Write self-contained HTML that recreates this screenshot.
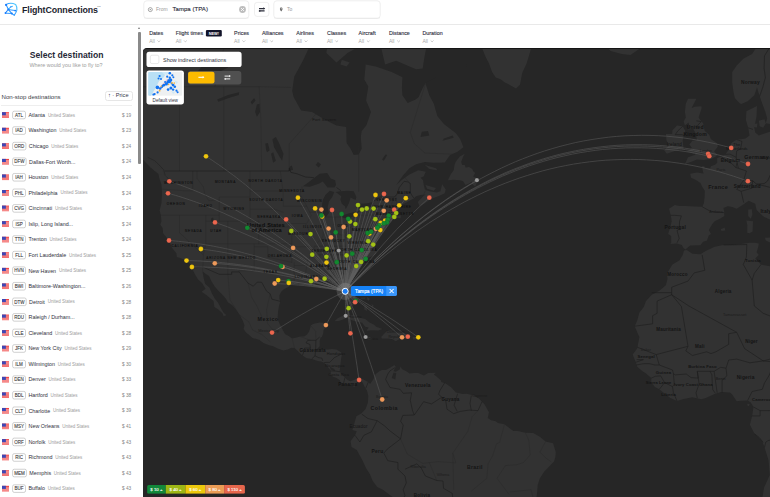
<!DOCTYPE html>
<html><head><meta charset="utf-8"><style>
*{margin:0;padding:0;box-sizing:border-box}
html,body{width:770px;height:497px;overflow:hidden;background:#fff;font-family:"Liberation Sans",sans-serif;color:#2a2c3a}
.a{position:absolute;white-space:nowrap}
#map{position:absolute;left:143px;top:48px;width:627px;height:449px;background:#262626;overflow:hidden;border-top-left-radius:4px;border-top:1px solid #151515}
#map svg{position:absolute;left:0;top:-1px}
.row{position:absolute;left:0;width:136px;height:15.56px}
.flag{position:absolute;left:2px;top:5.2px;width:7px;height:5.2px;background:repeating-linear-gradient(#e8383d 0 .8px,#fff .8px 1.5px)}
.flag:before{content:"";position:absolute;left:0;top:0;width:3.6px;height:2.8px;background:#3a4fa8}
.code{position:absolute;left:12.5px;top:3.7px;width:13.2px;height:7.7px;border:.7px solid #9a9a9a;border-radius:1.6px;font-size:4.4px;line-height:6.3px;text-align:center;color:#333}
.city{position:absolute;left:28.4px;top:3.6px;font-size:5.3px;line-height:7px;color:#30323e}
.cty{font-size:4.3px;color:#a6a6a6;margin-left:2.6px}
.pr{position:absolute;right:5px;top:4px;font-size:4.6px;line-height:6px;color:#888}
.flt{position:absolute;top:29.8px;font-size:5.35px;line-height:7px;color:#30323e}
.all{position:absolute;top:37.6px;font-size:4.9px;line-height:6px;color:#b0b0b0}
</style></head><body>
<!-- header -->
<div class="a" style="left:0;top:24px;width:770px;height:.8px;background:#e9e9e9"></div>
<svg class="a" style="left:0;top:0" width="770" height="48" viewBox="0 0 770 48">
<defs><linearGradient id="lg" x1="0" y1="1" x2="1" y2="0"><stop offset="0" stop-color="#0a66ff"/><stop offset="1" stop-color="#56d4ff"/></linearGradient></defs>
<g fill="none" stroke="url(#lg)" stroke-width="1.05" stroke-linecap="round" stroke-linejoin="round">
<path d="M6 4.6 Q10.5 2 15.6 4.4 Q18.8 9.5 14.3 15.2"/><path d="M6 4.6 L8.4 9.4 L11.8 13.6 L14.3 15.2"/><path d="M5.4 13 L8.4 9.4 L10.5 7"/><path d="M5.4 13 L11.8 13.6"/><path d="M8.4 9.4 L15.2 10.6"/><path d="M10.5 7 L12.5 6.2"/>
</g>
<g fill="#1a7dff"><circle cx="6.1" cy="4.9" r="1.1"/><circle cx="8.4" cy="9.4" r="1"/><circle cx="15.2" cy="10.6" r=".9"/><circle cx="11.8" cy="13.6" r="1"/><circle cx="5.5" cy="13" r=".9"/></g>
<text x="22" y="12.5" font-size="8.85" font-weight="bold" fill="#1c1e2e" letter-spacing="-.1">FlightConnections</text>
<text x="97.3" y="6.8" font-size="2.2" fill="#555">TM</text>
<rect x="143.8" y="0.8" width="105" height="17.6" rx="3" fill="#fff" stroke="#e2e2e2" stroke-width=".6"/>
<rect x="143.8" y="17.6" width="105" height="1.2" rx=".6" fill="#000" fill-opacity=".035"/>
<circle cx="150.3" cy="9.6" r="2" fill="none" stroke="#8a8a8a" stroke-width=".75"/><circle cx="150.3" cy="9.6" r=".7" fill="#8a8a8a"/>
<text x="156" y="11.3" font-size="5" fill="#9a9a9a">From</text>
<text x="172.5" y="11.3" font-size="6.0" fill="#272938" stroke="#272938" stroke-width=".12" letter-spacing=".05">Tampa (TPA)</text>
<circle cx="242.5" cy="9.5" r="3.4" fill="#bdbdbd"/><path d="M241 8 L244 11 M244 8 L241 11" stroke="#fff" stroke-width=".8"/>
<rect x="254.5" y="2.4" width="14.4" height="14" rx="2.6" fill="#fff" stroke="#e4e4e4" stroke-width=".6"/>
<path d="M259 8.6 H264.6 M264.6 10.9 H259" stroke="#2b2d3a" stroke-width="1.2"/><path d="M263.3 7.3 L265.2 8.6 L263.3 9.6 Z M260.3 9.9 L258.4 10.9 L260.3 12.1 Z" fill="#2b2d3a"/>
<rect x="273.8" y="0.8" width="106.4" height="17.6" rx="3" fill="#fff" stroke="#e2e2e2" stroke-width=".6"/>
<rect x="273.8" y="17.6" width="106.4" height="1.2" rx=".6" fill="#000" fill-opacity=".035"/>
<path d="M281.2 11.4 C279.4 9.5 279.6 7.4 281.2 7.4 C282.8 7.4 283 9.5 281.2 11.4 Z" fill="#666"/><circle cx="281.2" cy="8.7" r=".5" fill="#fff"/>
<text x="287" y="11.2" font-size="5" fill="#9a9a9a">To</text>
<text x="149.2" y="35.15" font-size="5.35" fill="#30323f" stroke="#30323f" stroke-width=".12" letter-spacing=".02">Dates</text><text x="149.2" y="42.75" font-size="5" fill="#a8a8a8">All</text><path d="M157.5 40.5 L158.9 41.9 L160.3 40.5" fill="none" stroke="#a8a8a8" stroke-width=".6"/>
<text x="175.7" y="35.15" font-size="5.35" fill="#30323f" stroke="#30323f" stroke-width=".12" letter-spacing=".02">Flight times</text><text x="175.7" y="42.75" font-size="5" fill="#a8a8a8">All</text><path d="M184.0 40.5 L185.4 41.9 L186.8 40.5" fill="none" stroke="#a8a8a8" stroke-width=".6"/>
<text x="234.1" y="35.15" font-size="5.35" fill="#30323f" stroke="#30323f" stroke-width=".12" letter-spacing=".02">Prices</text><text x="234.1" y="42.75" font-size="5" fill="#a8a8a8">All</text><path d="M242.4 40.5 L243.8 41.9 L245.2 40.5" fill="none" stroke="#a8a8a8" stroke-width=".6"/>
<text x="262.0" y="35.15" font-size="5.35" fill="#30323f" stroke="#30323f" stroke-width=".12" letter-spacing=".02">Alliances</text><text x="262.0" y="42.75" font-size="5" fill="#a8a8a8">All</text><path d="M270.3 40.5 L271.7 41.9 L273.1 40.5" fill="none" stroke="#a8a8a8" stroke-width=".6"/>
<text x="296.3" y="35.15" font-size="5.35" fill="#30323f" stroke="#30323f" stroke-width=".12" letter-spacing=".02">Airlines</text><text x="296.3" y="42.75" font-size="5" fill="#a8a8a8">All</text><path d="M304.6 40.5 L306.0 41.9 L307.4 40.5" fill="none" stroke="#a8a8a8" stroke-width=".6"/>
<text x="327.0" y="35.15" font-size="5.35" fill="#30323f" stroke="#30323f" stroke-width=".12" letter-spacing=".02">Classes</text><text x="327.0" y="42.75" font-size="5" fill="#a8a8a8">All</text><path d="M335.3 40.5 L336.7 41.9 L338.1 40.5" fill="none" stroke="#a8a8a8" stroke-width=".6"/>
<text x="358.6" y="35.15" font-size="5.35" fill="#30323f" stroke="#30323f" stroke-width=".12" letter-spacing=".02">Aircraft</text><text x="358.6" y="42.75" font-size="5" fill="#a8a8a8">All</text><path d="M366.9 40.5 L368.3 41.9 L369.7 40.5" fill="none" stroke="#a8a8a8" stroke-width=".6"/>
<text x="388.9" y="35.15" font-size="5.35" fill="#30323f" stroke="#30323f" stroke-width=".12" letter-spacing=".02">Distance</text><text x="388.9" y="42.75" font-size="5" fill="#a8a8a8">All</text><path d="M397.2 40.5 L398.6 41.9 L400.0 40.5" fill="none" stroke="#a8a8a8" stroke-width=".6"/>
<text x="422.4" y="35.15" font-size="5.35" fill="#30323f" stroke="#30323f" stroke-width=".12" letter-spacing=".02">Duration</text><text x="422.4" y="42.75" font-size="5" fill="#a8a8a8">All</text><path d="M430.7 40.5 L432.1 41.9 L433.5 40.5" fill="none" stroke="#a8a8a8" stroke-width=".6"/>
<rect x="205.9" y="29.9" width="15.9" height="6.5" rx="1.2" fill="#12142a"/>
<text x="213.85" y="34.6" font-size="3.9" font-weight="bold" fill="#fff" text-anchor="middle">NEW!</text>
</svg>
<!-- left panel -->
<div class="a" style="left:29.8px;top:49.6px;font-size:8.62px;line-height:10px;font-weight:bold;color:#262836">Select destination</div>
<div class="a" style="left:29.4px;top:61.7px;font-size:5.4px;line-height:7px;color:#9c9c9c">Where would you like to fly to?</div>
<div class="a" style="left:1.5px;top:93.1px;font-size:6.12px;line-height:7px;color:#3b3d48">Non-stop destinations</div>
<div class="a" style="left:104.5px;top:90.5px;width:28.5px;height:10px;border:.6px solid #e6e6e6;border-radius:2.5px"></div>
<div class="a" style="left:108px;top:92.2px;font-size:5.6px;line-height:7px;color:#33354a">&#8593; &#183; Price</div>
<div class="a" style="left:1px;top:104.7px;width:131px;height:.7px;background:#eeeeee"></div>
<svg class="a" style="left:0;top:0" width="137" height="497" viewBox="0 0 137 497">
<g transform="translate(2,112.20)"><rect width="7" height="5.6" fill="#ef4040"/><rect y="1.1" width="7" height=".55" fill="#fff" fill-opacity=".7"/><rect y="2.2" width="7" height=".55" fill="#fff" fill-opacity=".7"/><rect y="3.3" width="7" height=".55" fill="#fff" fill-opacity=".7"/><rect y="4.4" width="7" height=".55" fill="#fff" fill-opacity=".7"/><rect width="3.9" height="3.1" fill="#3d47b5"/></g>
<rect x="12.6" y="111.20" width="12.90" height="7.6" rx="1.6" fill="none" stroke="#b2b2b2" stroke-width=".6"/>
<text x="19.05" y="116.75" font-size="4.5" fill="#3a3a3a" text-anchor="middle" stroke="#3a3a3a" stroke-width=".1">ATL</text>
<text x="28.40" y="116.85" font-size="5.36" fill="#30323e">Atlanta</text>
<text x="47.89" y="116.60" font-size="4.5" fill="#9c9c9c">United States</text>
<text x="131.2" y="116.70" font-size="4.7" fill="#858585" text-anchor="end">$ 19</text>
<g transform="translate(2,127.77)"><rect width="7" height="5.6" fill="#ef4040"/><rect y="1.1" width="7" height=".55" fill="#fff" fill-opacity=".7"/><rect y="2.2" width="7" height=".55" fill="#fff" fill-opacity=".7"/><rect y="3.3" width="7" height=".55" fill="#fff" fill-opacity=".7"/><rect y="4.4" width="7" height=".55" fill="#fff" fill-opacity=".7"/><rect width="3.9" height="3.1" fill="#3d47b5"/></g>
<rect x="12.6" y="126.77" width="12.90" height="7.6" rx="1.6" fill="none" stroke="#b2b2b2" stroke-width=".6"/>
<text x="19.05" y="132.32" font-size="4.5" fill="#3a3a3a" text-anchor="middle" stroke="#3a3a3a" stroke-width=".1">IAD</text>
<text x="28.40" y="132.42" font-size="5.36" fill="#30323e">Washington</text>
<text x="59.30" y="132.17" font-size="4.5" fill="#9c9c9c">United States</text>
<text x="131.2" y="132.27" font-size="4.7" fill="#858585" text-anchor="end">$ 23</text>
<g transform="translate(2,143.33)"><rect width="7" height="5.6" fill="#ef4040"/><rect y="1.1" width="7" height=".55" fill="#fff" fill-opacity=".7"/><rect y="2.2" width="7" height=".55" fill="#fff" fill-opacity=".7"/><rect y="3.3" width="7" height=".55" fill="#fff" fill-opacity=".7"/><rect y="4.4" width="7" height=".55" fill="#fff" fill-opacity=".7"/><rect width="3.9" height="3.1" fill="#3d47b5"/></g>
<rect x="12.6" y="142.33" width="13.32" height="7.6" rx="1.6" fill="none" stroke="#b2b2b2" stroke-width=".6"/>
<text x="19.26" y="147.88" font-size="4.5" fill="#3a3a3a" text-anchor="middle" stroke="#3a3a3a" stroke-width=".1">ORD</text>
<text x="28.82" y="147.98" font-size="5.36" fill="#30323e">Chicago</text>
<text x="51.29" y="147.73" font-size="4.5" fill="#9c9c9c">United States</text>
<text x="131.2" y="147.83" font-size="4.7" fill="#858585" text-anchor="end">$ 24</text>
<g transform="translate(2,158.90)"><rect width="7" height="5.6" fill="#ef4040"/><rect y="1.1" width="7" height=".55" fill="#fff" fill-opacity=".7"/><rect y="2.2" width="7" height=".55" fill="#fff" fill-opacity=".7"/><rect y="3.3" width="7" height=".55" fill="#fff" fill-opacity=".7"/><rect y="4.4" width="7" height=".55" fill="#fff" fill-opacity=".7"/><rect width="3.9" height="3.1" fill="#3d47b5"/></g>
<rect x="12.6" y="157.90" width="13.57" height="7.6" rx="1.6" fill="none" stroke="#b2b2b2" stroke-width=".6"/>
<text x="19.39" y="163.45" font-size="4.5" fill="#3a3a3a" text-anchor="middle" stroke="#3a3a3a" stroke-width=".1">DFW</text>
<text x="29.07" y="163.55" font-size="5.36" fill="#30323e">Dallas-Fort Worth...</text>
<text x="131.2" y="163.40" font-size="4.7" fill="#858585" text-anchor="end">$ 24</text>
<g transform="translate(2,174.47)"><rect width="7" height="5.6" fill="#ef4040"/><rect y="1.1" width="7" height=".55" fill="#fff" fill-opacity=".7"/><rect y="2.2" width="7" height=".55" fill="#fff" fill-opacity=".7"/><rect y="3.3" width="7" height=".55" fill="#fff" fill-opacity=".7"/><rect y="4.4" width="7" height=".55" fill="#fff" fill-opacity=".7"/><rect width="3.9" height="3.1" fill="#3d47b5"/></g>
<rect x="12.6" y="173.47" width="12.90" height="7.6" rx="1.6" fill="none" stroke="#b2b2b2" stroke-width=".6"/>
<text x="19.05" y="179.02" font-size="4.5" fill="#3a3a3a" text-anchor="middle" stroke="#3a3a3a" stroke-width=".1">IAH</text>
<text x="28.40" y="179.12" font-size="5.36" fill="#30323e">Houston</text>
<text x="51.16" y="178.87" font-size="4.5" fill="#9c9c9c">United States</text>
<text x="131.2" y="178.97" font-size="4.7" fill="#858585" text-anchor="end">$ 24</text>
<g transform="translate(2,190.03)"><rect width="7" height="5.6" fill="#ef4040"/><rect y="1.1" width="7" height=".55" fill="#fff" fill-opacity=".7"/><rect y="2.2" width="7" height=".55" fill="#fff" fill-opacity=".7"/><rect y="3.3" width="7" height=".55" fill="#fff" fill-opacity=".7"/><rect y="4.4" width="7" height=".55" fill="#fff" fill-opacity=".7"/><rect width="3.9" height="3.1" fill="#3d47b5"/></g>
<rect x="12.6" y="189.03" width="12.90" height="7.6" rx="1.6" fill="none" stroke="#b2b2b2" stroke-width=".6"/>
<text x="19.05" y="194.59" font-size="4.5" fill="#3a3a3a" text-anchor="middle" stroke="#3a3a3a" stroke-width=".1">PHL</text>
<text x="28.40" y="194.69" font-size="5.36" fill="#30323e">Philadelphia</text>
<text x="60.40" y="194.44" font-size="4.5" fill="#9c9c9c">United States</text>
<text x="131.2" y="194.53" font-size="4.7" fill="#858585" text-anchor="end">$ 24</text>
<g transform="translate(2,205.60)"><rect width="7" height="5.6" fill="#ef4040"/><rect y="1.1" width="7" height=".55" fill="#fff" fill-opacity=".7"/><rect y="2.2" width="7" height=".55" fill="#fff" fill-opacity=".7"/><rect y="3.3" width="7" height=".55" fill="#fff" fill-opacity=".7"/><rect y="4.4" width="7" height=".55" fill="#fff" fill-opacity=".7"/><rect width="3.9" height="3.1" fill="#3d47b5"/></g>
<rect x="12.6" y="204.60" width="13.07" height="7.6" rx="1.6" fill="none" stroke="#b2b2b2" stroke-width=".6"/>
<text x="19.13" y="210.15" font-size="4.5" fill="#3a3a3a" text-anchor="middle" stroke="#3a3a3a" stroke-width=".1">CVG</text>
<text x="28.57" y="210.25" font-size="5.36" fill="#30323e">Cincinnati</text>
<text x="54.90" y="210.00" font-size="4.5" fill="#9c9c9c">United States</text>
<text x="131.2" y="210.10" font-size="4.7" fill="#858585" text-anchor="end">$ 24</text>
<g transform="translate(2,221.17)"><rect width="7" height="5.6" fill="#ef4040"/><rect y="1.1" width="7" height=".55" fill="#fff" fill-opacity=".7"/><rect y="2.2" width="7" height=".55" fill="#fff" fill-opacity=".7"/><rect y="3.3" width="7" height=".55" fill="#fff" fill-opacity=".7"/><rect y="4.4" width="7" height=".55" fill="#fff" fill-opacity=".7"/><rect width="3.9" height="3.1" fill="#3d47b5"/></g>
<rect x="12.6" y="220.17" width="12.90" height="7.6" rx="1.6" fill="none" stroke="#b2b2b2" stroke-width=".6"/>
<text x="19.05" y="225.72" font-size="4.5" fill="#3a3a3a" text-anchor="middle" stroke="#3a3a3a" stroke-width=".1">ISP</text>
<text x="28.40" y="225.82" font-size="5.36" fill="#30323e">Islip, Long Island...</text>
<text x="131.2" y="225.67" font-size="4.7" fill="#858585" text-anchor="end">$ 24</text>
<g transform="translate(2,236.74)"><rect width="7" height="5.6" fill="#ef4040"/><rect y="1.1" width="7" height=".55" fill="#fff" fill-opacity=".7"/><rect y="2.2" width="7" height=".55" fill="#fff" fill-opacity=".7"/><rect y="3.3" width="7" height=".55" fill="#fff" fill-opacity=".7"/><rect y="4.4" width="7" height=".55" fill="#fff" fill-opacity=".7"/><rect width="3.9" height="3.1" fill="#3d47b5"/></g>
<rect x="12.6" y="235.74" width="12.90" height="7.6" rx="1.6" fill="none" stroke="#b2b2b2" stroke-width=".6"/>
<text x="19.05" y="241.29" font-size="4.5" fill="#3a3a3a" text-anchor="middle" stroke="#3a3a3a" stroke-width=".1">TTN</text>
<text x="28.40" y="241.39" font-size="5.36" fill="#30323e">Trenton</text>
<text x="49.47" y="241.14" font-size="4.5" fill="#9c9c9c">United States</text>
<text x="131.2" y="241.24" font-size="4.7" fill="#858585" text-anchor="end">$ 24</text>
<g transform="translate(2,252.30)"><rect width="7" height="5.6" fill="#ef4040"/><rect y="1.1" width="7" height=".55" fill="#fff" fill-opacity=".7"/><rect y="2.2" width="7" height=".55" fill="#fff" fill-opacity=".7"/><rect y="3.3" width="7" height=".55" fill="#fff" fill-opacity=".7"/><rect y="4.4" width="7" height=".55" fill="#fff" fill-opacity=".7"/><rect width="3.9" height="3.1" fill="#3d47b5"/></g>
<rect x="12.6" y="251.30" width="12.90" height="7.6" rx="1.6" fill="none" stroke="#b2b2b2" stroke-width=".6"/>
<text x="19.05" y="256.85" font-size="4.5" fill="#3a3a3a" text-anchor="middle" stroke="#3a3a3a" stroke-width=".1">FLL</text>
<text x="28.40" y="256.95" font-size="5.36" fill="#30323e">Fort Lauderdale</text>
<text x="69.04" y="256.70" font-size="4.5" fill="#9c9c9c">United States</text>
<text x="131.2" y="256.80" font-size="4.7" fill="#858585" text-anchor="end">$ 25</text>
<g transform="translate(2,267.87)"><rect width="7" height="5.6" fill="#ef4040"/><rect y="1.1" width="7" height=".55" fill="#fff" fill-opacity=".7"/><rect y="2.2" width="7" height=".55" fill="#fff" fill-opacity=".7"/><rect y="3.3" width="7" height=".55" fill="#fff" fill-opacity=".7"/><rect y="4.4" width="7" height=".55" fill="#fff" fill-opacity=".7"/><rect width="3.9" height="3.1" fill="#3d47b5"/></g>
<rect x="12.6" y="266.87" width="12.90" height="7.6" rx="1.6" fill="none" stroke="#b2b2b2" stroke-width=".6"/>
<text x="19.05" y="272.42" font-size="4.5" fill="#3a3a3a" text-anchor="middle" stroke="#3a3a3a" stroke-width=".1">HVN</text>
<text x="28.40" y="272.52" font-size="5.36" fill="#30323e">New Haven</text>
<text x="58.90" y="272.27" font-size="4.5" fill="#9c9c9c">United States</text>
<text x="131.2" y="272.37" font-size="4.7" fill="#858585" text-anchor="end">$ 25</text>
<g transform="translate(2,283.44)"><rect width="7" height="5.6" fill="#ef4040"/><rect y="1.1" width="7" height=".55" fill="#fff" fill-opacity=".7"/><rect y="2.2" width="7" height=".55" fill="#fff" fill-opacity=".7"/><rect y="3.3" width="7" height=".55" fill="#fff" fill-opacity=".7"/><rect y="4.4" width="7" height=".55" fill="#fff" fill-opacity=".7"/><rect width="3.9" height="3.1" fill="#3d47b5"/></g>
<rect x="12.6" y="282.44" width="12.90" height="7.6" rx="1.6" fill="none" stroke="#b2b2b2" stroke-width=".6"/>
<text x="19.05" y="287.99" font-size="4.5" fill="#3a3a3a" text-anchor="middle" stroke="#3a3a3a" stroke-width=".1">BWI</text>
<text x="28.40" y="288.09" font-size="5.36" fill="#30323e">Baltimore-Washington...</text>
<text x="131.2" y="287.94" font-size="4.7" fill="#858585" text-anchor="end">$ 26</text>
<g transform="translate(2,299.00)"><rect width="7" height="5.6" fill="#ef4040"/><rect y="1.1" width="7" height=".55" fill="#fff" fill-opacity=".7"/><rect y="2.2" width="7" height=".55" fill="#fff" fill-opacity=".7"/><rect y="3.3" width="7" height=".55" fill="#fff" fill-opacity=".7"/><rect y="4.4" width="7" height=".55" fill="#fff" fill-opacity=".7"/><rect width="3.9" height="3.1" fill="#3d47b5"/></g>
<rect x="12.6" y="298.00" width="13.57" height="7.6" rx="1.6" fill="none" stroke="#b2b2b2" stroke-width=".6"/>
<text x="19.39" y="303.55" font-size="4.5" fill="#3a3a3a" text-anchor="middle" stroke="#3a3a3a" stroke-width=".1">DTW</text>
<text x="29.07" y="303.65" font-size="5.36" fill="#30323e">Detroit</text>
<text x="47.66" y="303.40" font-size="4.5" fill="#9c9c9c">United States</text>
<text x="131.2" y="303.50" font-size="4.7" fill="#858585" text-anchor="end">$ 28</text>
<g transform="translate(2,314.57)"><rect width="7" height="5.6" fill="#ef4040"/><rect y="1.1" width="7" height=".55" fill="#fff" fill-opacity=".7"/><rect y="2.2" width="7" height=".55" fill="#fff" fill-opacity=".7"/><rect y="3.3" width="7" height=".55" fill="#fff" fill-opacity=".7"/><rect y="4.4" width="7" height=".55" fill="#fff" fill-opacity=".7"/><rect width="3.9" height="3.1" fill="#3d47b5"/></g>
<rect x="12.6" y="313.57" width="13.07" height="7.6" rx="1.6" fill="none" stroke="#b2b2b2" stroke-width=".6"/>
<text x="19.13" y="319.12" font-size="4.5" fill="#3a3a3a" text-anchor="middle" stroke="#3a3a3a" stroke-width=".1">RDU</text>
<text x="28.57" y="319.22" font-size="5.36" fill="#30323e">Raleigh / Durham...</text>
<text x="131.2" y="319.07" font-size="4.7" fill="#858585" text-anchor="end">$ 28</text>
<g transform="translate(2,330.14)"><rect width="7" height="5.6" fill="#ef4040"/><rect y="1.1" width="7" height=".55" fill="#fff" fill-opacity=".7"/><rect y="2.2" width="7" height=".55" fill="#fff" fill-opacity=".7"/><rect y="3.3" width="7" height=".55" fill="#fff" fill-opacity=".7"/><rect y="4.4" width="7" height=".55" fill="#fff" fill-opacity=".7"/><rect width="3.9" height="3.1" fill="#3d47b5"/></g>
<rect x="12.6" y="329.14" width="12.90" height="7.6" rx="1.6" fill="none" stroke="#b2b2b2" stroke-width=".6"/>
<text x="19.05" y="334.69" font-size="4.5" fill="#3a3a3a" text-anchor="middle" stroke="#3a3a3a" stroke-width=".1">CLE</text>
<text x="28.40" y="334.79" font-size="5.36" fill="#30323e">Cleveland</text>
<text x="55.04" y="334.54" font-size="4.5" fill="#9c9c9c">United States</text>
<text x="131.2" y="334.64" font-size="4.7" fill="#858585" text-anchor="end">$ 28</text>
<g transform="translate(2,345.70)"><rect width="7" height="5.6" fill="#ef4040"/><rect y="1.1" width="7" height=".55" fill="#fff" fill-opacity=".7"/><rect y="2.2" width="7" height=".55" fill="#fff" fill-opacity=".7"/><rect y="3.3" width="7" height=".55" fill="#fff" fill-opacity=".7"/><rect y="4.4" width="7" height=".55" fill="#fff" fill-opacity=".7"/><rect width="3.9" height="3.1" fill="#3d47b5"/></g>
<rect x="12.6" y="344.70" width="12.90" height="7.6" rx="1.6" fill="none" stroke="#b2b2b2" stroke-width=".6"/>
<text x="19.05" y="350.25" font-size="4.5" fill="#3a3a3a" text-anchor="middle" stroke="#3a3a3a" stroke-width=".1">JFK</text>
<text x="28.40" y="350.36" font-size="5.36" fill="#30323e">New York City</text>
<text x="64.56" y="350.11" font-size="4.5" fill="#9c9c9c">United States</text>
<text x="131.2" y="350.20" font-size="4.7" fill="#858585" text-anchor="end">$ 29</text>
<g transform="translate(2,361.27)"><rect width="7" height="5.6" fill="#ef4040"/><rect y="1.1" width="7" height=".55" fill="#fff" fill-opacity=".7"/><rect y="2.2" width="7" height=".55" fill="#fff" fill-opacity=".7"/><rect y="3.3" width="7" height=".55" fill="#fff" fill-opacity=".7"/><rect y="4.4" width="7" height=".55" fill="#fff" fill-opacity=".7"/><rect width="3.9" height="3.1" fill="#3d47b5"/></g>
<rect x="12.6" y="360.27" width="12.90" height="7.6" rx="1.6" fill="none" stroke="#b2b2b2" stroke-width=".6"/>
<text x="19.05" y="365.82" font-size="4.5" fill="#3a3a3a" text-anchor="middle" stroke="#3a3a3a" stroke-width=".1">ILM</text>
<text x="28.40" y="365.92" font-size="5.36" fill="#30323e">Wilmington</text>
<text x="57.71" y="365.67" font-size="4.5" fill="#9c9c9c">United States</text>
<text x="131.2" y="365.77" font-size="4.7" fill="#858585" text-anchor="end">$ 30</text>
<g transform="translate(2,376.84)"><rect width="7" height="5.6" fill="#ef4040"/><rect y="1.1" width="7" height=".55" fill="#fff" fill-opacity=".7"/><rect y="2.2" width="7" height=".55" fill="#fff" fill-opacity=".7"/><rect y="3.3" width="7" height=".55" fill="#fff" fill-opacity=".7"/><rect y="4.4" width="7" height=".55" fill="#fff" fill-opacity=".7"/><rect width="3.9" height="3.1" fill="#3d47b5"/></g>
<rect x="12.6" y="375.84" width="12.90" height="7.6" rx="1.6" fill="none" stroke="#b2b2b2" stroke-width=".6"/>
<text x="19.05" y="381.39" font-size="4.5" fill="#3a3a3a" text-anchor="middle" stroke="#3a3a3a" stroke-width=".1">DEN</text>
<text x="28.40" y="381.49" font-size="5.36" fill="#30323e">Denver</text>
<text x="48.48" y="381.24" font-size="4.5" fill="#9c9c9c">United States</text>
<text x="131.2" y="381.34" font-size="4.7" fill="#858585" text-anchor="end">$ 33</text>
<g transform="translate(2,392.41)"><rect width="7" height="5.6" fill="#ef4040"/><rect y="1.1" width="7" height=".55" fill="#fff" fill-opacity=".7"/><rect y="2.2" width="7" height=".55" fill="#fff" fill-opacity=".7"/><rect y="3.3" width="7" height=".55" fill="#fff" fill-opacity=".7"/><rect y="4.4" width="7" height=".55" fill="#fff" fill-opacity=".7"/><rect width="3.9" height="3.1" fill="#3d47b5"/></g>
<rect x="12.6" y="391.41" width="12.90" height="7.6" rx="1.6" fill="none" stroke="#b2b2b2" stroke-width=".6"/>
<text x="19.05" y="396.96" font-size="4.5" fill="#3a3a3a" text-anchor="middle" stroke="#3a3a3a" stroke-width=".1">BDL</text>
<text x="28.40" y="397.06" font-size="5.36" fill="#30323e">Hartford</text>
<text x="50.56" y="396.81" font-size="4.5" fill="#9c9c9c">United States</text>
<text x="131.2" y="396.91" font-size="4.7" fill="#858585" text-anchor="end">$ 38</text>
<g transform="translate(2,407.97)"><rect width="7" height="5.6" fill="#ef4040"/><rect y="1.1" width="7" height=".55" fill="#fff" fill-opacity=".7"/><rect y="2.2" width="7" height=".55" fill="#fff" fill-opacity=".7"/><rect y="3.3" width="7" height=".55" fill="#fff" fill-opacity=".7"/><rect y="4.4" width="7" height=".55" fill="#fff" fill-opacity=".7"/><rect width="3.9" height="3.1" fill="#3d47b5"/></g>
<rect x="12.6" y="406.97" width="12.90" height="7.6" rx="1.6" fill="none" stroke="#b2b2b2" stroke-width=".6"/>
<text x="19.05" y="412.52" font-size="4.5" fill="#3a3a3a" text-anchor="middle" stroke="#3a3a3a" stroke-width=".1">CLT</text>
<text x="28.40" y="412.62" font-size="5.36" fill="#30323e">Charlotte</text>
<text x="52.95" y="412.37" font-size="4.5" fill="#9c9c9c">United States</text>
<text x="131.2" y="412.47" font-size="4.7" fill="#858585" text-anchor="end">$ 39</text>
<g transform="translate(2,423.54)"><rect width="7" height="5.6" fill="#ef4040"/><rect y="1.1" width="7" height=".55" fill="#fff" fill-opacity=".7"/><rect y="2.2" width="7" height=".55" fill="#fff" fill-opacity=".7"/><rect y="3.3" width="7" height=".55" fill="#fff" fill-opacity=".7"/><rect y="4.4" width="7" height=".55" fill="#fff" fill-opacity=".7"/><rect width="3.9" height="3.1" fill="#3d47b5"/></g>
<rect x="12.6" y="422.54" width="13.07" height="7.6" rx="1.6" fill="none" stroke="#b2b2b2" stroke-width=".6"/>
<text x="19.13" y="428.09" font-size="4.5" fill="#3a3a3a" text-anchor="middle" stroke="#3a3a3a" stroke-width=".1">MSY</text>
<text x="28.57" y="428.19" font-size="5.36" fill="#30323e">New Orleans</text>
<text x="62.35" y="427.94" font-size="4.5" fill="#9c9c9c">United States</text>
<text x="131.2" y="428.04" font-size="4.7" fill="#858585" text-anchor="end">$ 41</text>
<g transform="translate(2,439.11)"><rect width="7" height="5.6" fill="#ef4040"/><rect y="1.1" width="7" height=".55" fill="#fff" fill-opacity=".7"/><rect y="2.2" width="7" height=".55" fill="#fff" fill-opacity=".7"/><rect y="3.3" width="7" height=".55" fill="#fff" fill-opacity=".7"/><rect y="4.4" width="7" height=".55" fill="#fff" fill-opacity=".7"/><rect width="3.9" height="3.1" fill="#3d47b5"/></g>
<rect x="12.6" y="438.11" width="12.90" height="7.6" rx="1.6" fill="none" stroke="#b2b2b2" stroke-width=".6"/>
<text x="19.05" y="443.66" font-size="4.5" fill="#3a3a3a" text-anchor="middle" stroke="#3a3a3a" stroke-width=".1">ORF</text>
<text x="28.40" y="443.76" font-size="5.36" fill="#30323e">Norfolk</text>
<text x="48.18" y="443.51" font-size="4.5" fill="#9c9c9c">United States</text>
<text x="131.2" y="443.61" font-size="4.7" fill="#858585" text-anchor="end">$ 43</text>
<g transform="translate(2,454.67)"><rect width="7" height="5.6" fill="#ef4040"/><rect y="1.1" width="7" height=".55" fill="#fff" fill-opacity=".7"/><rect y="2.2" width="7" height=".55" fill="#fff" fill-opacity=".7"/><rect y="3.3" width="7" height=".55" fill="#fff" fill-opacity=".7"/><rect y="4.4" width="7" height=".55" fill="#fff" fill-opacity=".7"/><rect width="3.9" height="3.1" fill="#3d47b5"/></g>
<rect x="12.6" y="453.67" width="12.90" height="7.6" rx="1.6" fill="none" stroke="#b2b2b2" stroke-width=".6"/>
<text x="19.05" y="459.22" font-size="4.5" fill="#3a3a3a" text-anchor="middle" stroke="#3a3a3a" stroke-width=".1">RIC</text>
<text x="28.40" y="459.32" font-size="5.36" fill="#30323e">Richmond</text>
<text x="55.33" y="459.07" font-size="4.5" fill="#9c9c9c">United States</text>
<text x="131.2" y="459.17" font-size="4.7" fill="#858585" text-anchor="end">$ 43</text>
<g transform="translate(2,470.24)"><rect width="7" height="5.6" fill="#ef4040"/><rect y="1.1" width="7" height=".55" fill="#fff" fill-opacity=".7"/><rect y="2.2" width="7" height=".55" fill="#fff" fill-opacity=".7"/><rect y="3.3" width="7" height=".55" fill="#fff" fill-opacity=".7"/><rect y="4.4" width="7" height=".55" fill="#fff" fill-opacity=".7"/><rect width="3.9" height="3.1" fill="#3d47b5"/></g>
<rect x="12.6" y="469.24" width="13.83" height="7.6" rx="1.6" fill="none" stroke="#b2b2b2" stroke-width=".6"/>
<text x="19.52" y="474.79" font-size="4.5" fill="#3a3a3a" text-anchor="middle" stroke="#3a3a3a" stroke-width=".1">MEM</text>
<text x="29.33" y="474.89" font-size="5.36" fill="#30323e">Memphis</text>
<text x="53.87" y="474.64" font-size="4.5" fill="#9c9c9c">United States</text>
<text x="131.2" y="474.74" font-size="4.7" fill="#858585" text-anchor="end">$ 43</text>
<g transform="translate(2,485.81)"><rect width="7" height="5.6" fill="#ef4040"/><rect y="1.1" width="7" height=".55" fill="#fff" fill-opacity=".7"/><rect y="2.2" width="7" height=".55" fill="#fff" fill-opacity=".7"/><rect y="3.3" width="7" height=".55" fill="#fff" fill-opacity=".7"/><rect y="4.4" width="7" height=".55" fill="#fff" fill-opacity=".7"/><rect width="3.9" height="3.1" fill="#3d47b5"/></g>
<rect x="12.6" y="484.81" width="12.90" height="7.6" rx="1.6" fill="none" stroke="#b2b2b2" stroke-width=".6"/>
<text x="19.05" y="490.36" font-size="4.5" fill="#3a3a3a" text-anchor="middle" stroke="#3a3a3a" stroke-width=".1">BUF</text>
<text x="28.40" y="490.46" font-size="5.36" fill="#30323e">Buffalo</text>
<text x="47.79" y="490.21" font-size="4.5" fill="#9c9c9c">United States</text>
<text x="131.2" y="490.31" font-size="4.7" fill="#858585" text-anchor="end">$ 43</text>
</svg>
<!-- scrollbar -->
<div class="a" style="left:138.3px;top:31.5px;width:3.2px;height:132px;background:#8a8a8a;border-radius:1px"></div>
<div class="a" style="left:138.3px;top:26.6px;width:0;height:0;border-left:1.6px solid transparent;border-right:1.6px solid transparent;border-bottom:2px solid #777"></div>
<!-- map -->
<div id="map"><svg width="627" height="449" viewBox="0 0 627 449">
<style>.l{fill:#323232}.w{fill:#262626}.rt{fill:none;stroke:#5e5e5e;stroke-width:.52}.b{fill:none;stroke:#2a2a2a;stroke-width:.5}.cb{fill:none;stroke:#1d1d1d;stroke-width:.6}.sb{fill:none;stroke:#292929;stroke-width:.45}.wl{fill:none;stroke:#262626;stroke-width:.8}</style>
<rect width="627" height="449" fill="#262626"/>
<path class="l" d="M-52.0 -94.6 L284.1 -94.6 L281.9 0.9 L280.6 20.4 L282.4 35.0 L286.3 47.3 L290.8 55.8 L294.3 68.0 L300.9 76.0 L312.9 85.2 L317.3 91.2 L320.4 99.3 L314.2 103.9 L307.1 107.1 L301.8 114.5 L290.8 114.8 L281.9 114.1 L273.1 116.2 L266.4 120.3 L259.8 127.7 L253.2 136.9 L258.5 132.3 L266.4 126.4 L275.3 122.3 L282.8 123.7 L280.6 128.4 L277.5 129.7 L280.1 132.3 L280.6 136.2 L281.9 141.4 L286.3 143.3 L293.8 144.6 L297.4 143.3 L299.2 136.2 L302.7 141.4 L301.8 145.2 L296.5 147.7 L288.5 150.8 L281.9 155.2 L276.6 158.2 L274.8 153.9 L280.6 147.7 L282.8 146.5 L277.5 147.1 L273.1 148.3 L270.4 150.8 L266.4 152.7 L262.0 155.2 L256.7 157.6 L254.5 161.9 L254.9 163.7 L253.2 165.8 L255.4 167.9 L257.6 167.0 L257.8 169.0 L257.6 170.2 L254.9 169.9 L252.3 170.2 L248.7 171.4 L249.2 172.9 L242.1 175.5 L239.9 176.1 L239.9 180.1 L237.7 183.0 L235.7 185.3 L235.3 187.6 L234.2 190.4 L231.5 194.6 L231.1 196.5 L231.9 200.3 L233.3 204.2 L233.3 205.8 L228.8 208.5 L224.4 210.1 L222.7 212.8 L220.0 213.0 L216.9 216.5 L213.4 219.6 L209.8 222.8 L208.1 225.4 L207.2 229.5 L207.6 234.1 L208.9 237.2 L210.7 241.2 L211.6 245.7 L213.1 249.7 L212.9 254.1 L211.6 257.1 L209.4 257.6 L208.1 256.6 L205.9 253.6 L205.0 250.2 L203.2 248.2 L201.6 245.7 L201.0 242.2 L201.4 238.2 L199.2 236.7 L197.0 233.6 L194.4 232.9 L191.3 234.6 L189.5 234.6 L186.8 231.6 L184.6 231.1 L180.2 231.6 L177.5 230.0 L175.8 231.3 L172.7 231.6 L170.9 232.6 L172.7 237.2 L171.8 238.4 L169.6 236.7 L166.9 237.7 L163.4 236.7 L160.3 235.1 L155.9 234.1 L151.9 234.6 L148.4 236.2 L145.7 238.7 L140.8 241.2 L138.2 243.7 L136.4 247.2 L136.4 250.7 L137.3 253.4 L136.0 258.0 L135.1 262.9 L134.7 268.7 L135.1 272.5 L136.9 276.3 L140.0 282.5 L142.2 286.2 L145.7 288.1 L149.2 290.6 L153.7 289.5 L157.2 288.5 L161.2 288.5 L163.8 286.7 L166.1 283.4 L167.4 279.2 L167.8 277.3 L170.9 275.8 L176.7 274.4 L181.1 274.9 L183.3 276.3 L182.4 279.6 L180.6 282.0 L180.2 285.3 L178.9 289.0 L177.5 289.5 L176.7 293.2 L176.7 298.3 L174.0 301.1 L177.1 302.0 L180.2 301.5 L184.6 301.5 L189.0 301.1 L193.5 301.5 L197.9 304.3 L199.2 305.6 L198.3 309.7 L197.4 316.6 L197.0 320.6 L196.6 323.3 L198.3 326.0 L201.9 329.6 L204.5 331.9 L207.2 333.2 L211.2 331.9 L215.1 329.6 L218.7 330.5 L222.7 332.8 L225.3 334.1 L227.1 335.9 L230.2 331.4 L232.8 326.0 L236.4 323.3 L239.0 322.0 L243.0 322.0 L247.9 319.3 L251.4 317.0 L252.7 318.8 L250.5 323.3 L252.7 323.8 L256.7 321.5 L257.6 318.4 L258.9 321.1 L264.2 323.8 L266.4 325.6 L270.9 325.1 L275.3 325.1 L281.0 327.4 L285.0 325.1 L293.0 324.7 L290.8 326.5 L293.8 328.7 L297.8 332.3 L298.3 334.1 L302.7 335.5 L308.4 339.5 L312.9 344.4 L319.5 346.1 L323.9 345.7 L330.6 347.5 L335.9 350.6 L339.0 353.7 L341.6 356.4 L346.0 364.3 L344.7 370.1 L348.2 372.3 L352.7 373.2 L354.9 374.9 L361.5 376.3 L370.3 382.9 L374.8 382.9 L382.3 384.7 L390.2 385.1 L396.9 388.7 L402.6 393.5 L410.1 395.3 L412.8 404.2 L412.4 409.1 L411.0 413.6 L405.7 419.0 L401.3 423.5 L396.9 430.3 L394.7 437.1 L394.2 444.0 L393.3 450.9 L391.6 457.9 L385.8 472.1 L368.1 481.7 L301.8 511.5 L251.0 511.5 L256.3 454.6 L251.0 450.0 L246.5 446.7 L239.9 441.7 L234.2 438.9 L229.7 433.0 L227.1 426.6 L223.1 420.3 L220.0 413.6 L216.5 406.9 L213.8 402.0 L208.5 398.9 L207.6 393.1 L212.0 387.3 L213.8 383.3 L209.4 382.0 L211.6 374.5 L213.4 368.3 L217.8 365.7 L219.6 364.3 L222.7 360.8 L224.9 354.6 L225.3 347.9 L224.0 342.6 L222.2 339.9 L220.4 336.3 L219.1 334.1 L215.6 332.8 L212.9 335.5 L211.6 339.0 L208.9 337.7 L205.4 335.9 L200.5 335.9 L197.4 334.6 L197.0 332.3 L192.6 329.6 L189.9 328.7 L187.3 326.0 L188.2 322.9 L184.6 318.8 L181.1 314.8 L178.0 313.4 L174.5 312.9 L169.1 311.1 L163.8 310.2 L159.4 307.5 L155.0 303.3 L151.5 300.1 L148.4 299.7 L144.8 301.5 L140.4 302.4 L134.7 300.6 L130.2 298.3 L125.4 296.9 L120.5 295.1 L116.1 291.8 L109.5 289.9 L105.9 286.7 L102.8 284.3 L100.6 281.0 L101.5 277.3 L99.7 272.5 L96.6 266.8 L93.1 261.5 L89.1 257.1 L85.1 254.6 L82.9 250.7 L78.5 245.7 L75.8 243.2 L71.9 238.7 L68.3 233.1 L66.1 228.0 L62.1 225.4 L59.5 223.3 L60.4 229.0 L62.1 235.7 L66.6 239.7 L68.8 245.2 L71.9 250.7 L75.0 254.6 L78.1 260.5 L80.7 264.8 L83.4 267.2 L80.7 268.2 L79.4 265.3 L75.4 261.5 L71.4 259.0 L70.5 253.1 L66.6 249.7 L63.0 246.7 L58.6 243.7 L62.6 240.7 L59.0 235.1 L55.1 231.6 L52.0 226.4 L50.2 222.8 L49.3 219.6 L48.4 217.0 L45.8 214.4 L43.6 212.8 L42.7 212.0 L40.0 211.2 L36.5 209.8 L33.8 209.0 L33.4 205.3 L30.7 202.0 L28.1 198.2 L27.6 195.9 L25.4 192.6 L23.7 189.8 L20.1 185.3 L19.7 180.1 L17.3 176.7 L18.4 173.2 L17.9 167.3 L16.6 162.5 L18.4 155.2 L19.0 145.8 L18.8 140.7 L18.4 136.2 L16.1 129.7 L15.7 127.0 L15.3 125.7 L7.7 119.6 L-0.7 110.7 L-7.7 102.2 L-21.0 72.0 L-52.0 -20.1Z"/>
<path class="w" d="M166.9 -67.4 L166.9 -2.2 L159.9 12.7 L151.2 28.7 L149.2 43.0 L150.6 49.0 L158.1 62.4 L169.1 64.0 L182.4 72.0 L193.5 77.5 L203.2 79.1 L203.6 94.9 L207.6 100.7 L210.7 107.1 L215.6 106.4 L218.7 100.7 L217.8 89.0 L218.7 82.9 L223.3 77.5 L228.0 64.0 L223.1 52.4 L225.3 38.6 L221.3 31.4 L222.7 16.6 L232.8 18.5 L248.7 24.1 L259.4 29.2 L258.9 39.5 L259.4 47.3 L264.7 54.9 L272.6 51.6 L275.7 49.0 L278.8 42.1 L282.4 35.0 L293.0 29.6 L323.9 29.6 L323.9 -67.4Z"/>
<path class="l" d="M222.2 -67.4 L293.0 -67.4 L284.1 -4.2 L281.5 8.8 L279.7 20.4 L273.1 21.3 L264.2 17.5 L253.2 12.7 L242.1 16.6 L237.7 -2.2 L224.4 -4.2 L222.2 -20.1Z"/>
<path class="l" d="M186.8 -31.2 L213.4 -20.1 L212.0 0.9 L204.5 4.9 L193.5 14.6 L183.3 4.9 L186.8 -14.7Z"/>
<path class="l" d="M198.8 11.8 L206.7 14.6 L203.6 18.5 L197.4 16.6Z"/>
<path class="l" d="M319.5 -94.6 L337.2 -9.4 L339.4 0.9 L342.5 8.8 L346.0 15.6 L349.1 24.1 L352.7 29.6 L358.0 31.4 L361.5 34.2 L368.1 37.7 L373.0 40.4 L377.0 36.8 L379.2 25.0 L383.6 15.6 L388.0 0.9 L399.1 -20.1 L434.5 -94.6Z"/>
<path class="l" d="M461.0 -14.7 L463.2 -1.2 L467.6 2.9 L478.7 5.9 L487.5 6.9 L500.8 -2.2 L507.4 -11.5 L500.8 -25.6 L469.8 -25.6Z"/>
<path class="l" d="M304.9 132.3 L307.6 126.4 L310.7 122.3 L311.5 116.9 L312.9 113.4 L316.8 108.6 L321.7 105.7 L319.9 109.3 L318.2 114.1 L319.1 116.9 L321.7 116.9 L322.6 119.6 L326.1 118.9 L329.2 121.0 L330.6 123.7 L332.3 125.0 L330.1 128.4 L332.8 129.7 L333.6 132.3 L334.5 132.7 L332.3 138.5 L330.1 136.9 L328.3 133.6 L327.0 134.9 L322.6 136.9 L319.9 133.0 L316.8 132.3 L310.7 131.7Z"/>
<path class="l" d="M281.9 116.9 L293.0 120.3 L294.3 122.3 L286.3 121.0Z"/>
<path class="l" d="M282.4 136.9 L293.0 140.1 L290.8 142.7 L284.1 140.7Z"/>
<path class="l" d="M21.5 127.4 L15.3 125.7 L7.7 119.6 L-0.7 110.7 L3.3 110.0 L12.2 114.8 L18.8 121.0Z"/>
<path class="l" d="M191.5 273.2 L194.4 270.6 L199.2 268.0 L204.5 267.0 L211.2 267.2 L215.6 269.6 L222.2 271.1 L226.2 274.2 L231.1 276.8 L233.3 278.7 L239.2 281.0 L235.5 282.5 L228.8 282.2 L223.5 282.7 L225.7 279.6 L222.2 278.7 L219.1 274.7 L213.4 273.5 L208.1 272.0 L204.5 269.4 L200.1 271.6 L195.7 273.0Z"/>
<path class="l" d="M238.1 289.0 L244.3 282.5 L250.1 282.7 L257.6 283.4 L261.1 285.7 L264.9 288.5 L263.3 290.4 L257.6 290.4 L252.7 293.2 L249.6 291.3 L245.2 290.6 L239.0 290.4Z"/>
<path class="l" d="M220.7 289.5 L226.6 289.0 L230.2 291.3 L225.7 292.3 L222.2 290.4Z"/>
<path class="l" d="M269.7 289.0 L277.0 289.5 L277.0 291.3 L270.0 291.6Z"/>
<path class="l" d="M221.3 257.1 L223.5 258.0 L224.0 262.9 L221.3 261.5Z"/>
<path class="l" d="M217.8 249.7 L222.7 249.4 L221.8 250.7 L217.8 250.7Z"/>
<path class="l" d="M224.0 248.7 L226.6 250.7 L225.7 253.1 L224.4 251.2Z"/>
<path class="l" d="M228.0 255.6 L230.6 257.6 L229.7 260.0 L228.8 257.1Z"/>
<path class="l" d="M541.9 115.9 L548.6 113.8 L553.9 111.4 L560.5 112.1 L568.0 111.0 L573.3 108.2 L574.2 106.4 L571.1 103.6 L574.9 98.5 L573.8 94.9 L568.0 91.2 L566.2 86.7 L561.8 82.9 L560.1 75.2 L557.4 72.0 L555.6 69.6 L558.7 59.9 L558.3 58.3 L551.7 58.7 L548.6 59.9 L553.4 50.7 L545.0 50.7 L542.8 55.8 L541.9 64.0 L542.8 69.6 L540.6 73.6 L541.9 77.5 L545.5 74.4 L546.8 79.8 L544.6 81.4 L550.3 81.0 L553.0 85.9 L553.9 91.9 L549.4 92.7 L546.3 96.4 L549.0 100.0 L543.7 103.6 L548.6 105.0 L553.0 106.4 L549.4 107.8 L545.0 109.3Z"/>
<path class="l" d="M540.6 100.7 L539.7 92.7 L540.6 87.5 L542.4 82.9 L539.7 78.3 L534.0 77.5 L529.5 82.1 L529.1 85.9 L522.9 85.9 L523.4 91.9 L525.6 97.8 L521.1 102.2 L523.8 105.7 L530.4 103.6 L536.2 101.4Z"/>
<path class="l" d="M611.3 -94.6 L615.8 -4.2 L609.1 5.9 L600.3 10.8 L593.7 17.5 L589.2 24.1 L589.2 34.2 L590.6 44.7 L591.9 49.9 L596.3 54.9 L598.3 56.0 L604.7 53.3 L611.3 47.3 L614.0 39.5 L615.8 45.6 L616.7 48.2 L619.3 55.8 L622.4 64.0 L624.2 70.4 L622.8 75.2 L630.4 76.7 L637.9 72.0 L637.9 -94.6Z"/>
<path class="l" d="M637.9 87.5 L626.8 83.7 L620.2 85.9 L615.8 87.5 L612.2 84.4 L611.3 79.8 L613.6 68.0 L614.0 57.9 L603.4 63.2 L602.9 72.0 L605.2 79.8 L606.5 87.5 L602.5 90.4 L598.1 91.2 L593.7 91.6 L588.4 94.9 L587.5 99.3 L584.8 102.9 L582.2 106.4 L578.2 108.6 L574.2 110.0 L574.2 114.8 L572.4 116.6 L568.0 118.3 L567.1 120.3 L561.8 120.6 L561.4 118.3 L558.7 118.3 L560.5 125.4 L553.9 124.4 L547.2 125.7 L548.1 129.7 L552.5 131.7 L557.4 134.9 L559.2 138.8 L561.8 142.7 L561.6 149.0 L560.9 155.2 L559.2 158.8 L551.7 158.5 L542.4 157.9 L536.2 157.9 L531.8 157.0 L526.0 160.7 L527.8 167.3 L528.7 173.2 L527.3 179.0 L525.1 185.9 L528.2 188.1 L528.2 194.8 L527.3 195.9 L534.0 195.4 L538.8 197.0 L540.6 200.3 L542.4 201.4 L547.2 197.6 L557.4 197.3 L560.1 193.7 L564.0 192.6 L565.8 187.6 L568.0 186.1 L565.8 181.9 L569.3 176.1 L571.6 173.2 L576.9 170.8 L581.3 167.9 L581.3 164.3 L580.4 160.1 L584.8 158.2 L589.2 159.1 L593.7 160.7 L600.3 156.4 L605.6 152.7 L612.2 155.8 L613.6 161.9 L616.7 164.9 L621.1 169.0 L627.3 171.7 L637.9 173.2Z"/>
<path class="l" d="M615.8 72.8 L621.5 71.2 L622.8 75.2 L620.2 79.8 L616.7 78.3Z"/>
<path class="l" d="M610.5 76.0 L614.4 75.6 L614.0 79.5 L610.9 79.1Z"/>
<path class="l" d="M605.2 161.6 L608.9 161.3 L609.4 166.7 L607.8 170.8 L605.2 167.9Z"/>
<path class="l" d="M603.4 172.6 L610.0 173.2 L609.6 183.6 L606.5 185.3 L604.3 184.7 L604.3 177.3Z"/>
<path class="l" d="M622.0 189.8 L636.1 188.7 L633.9 197.6 L622.8 192.6Z"/>
<path class="l" d="M637.9 173.2 L627.3 171.7 L631.2 174.9 L637.0 179.0 L636.1 185.3 L637.9 190.4Z"/>
<path class="l" d="M577.7 181.3 L581.7 179.6 L582.2 182.4 L578.6 183.0Z"/>
<path class="l" d="M541.0 202.5 L543.7 202.0 L549.4 205.8 L557.4 206.3 L562.7 203.1 L571.6 198.7 L580.4 197.0 L589.2 197.0 L598.1 195.9 L606.9 194.8 L612.2 194.8 L615.8 195.4 L615.3 198.7 L613.6 204.2 L615.8 206.9 L612.2 210.6 L618.0 216.5 L625.5 218.1 L637.9 220.2 L637.9 462.6 L619.3 450.0 L621.1 439.4 L626.8 427.1 L625.5 412.2 L621.5 399.3 L619.3 393.5 L611.3 385.6 L606.9 376.7 L609.1 367.9 L610.5 359.0 L607.8 354.6 L604.7 352.4 L598.1 352.8 L593.7 353.3 L589.2 346.6 L587.0 344.4 L578.2 344.1 L571.6 346.1 L562.7 350.1 L558.3 351.3 L549.4 349.3 L540.6 351.0 L534.0 353.0 L527.3 350.1 L520.7 344.8 L516.3 341.3 L511.9 339.0 L508.3 334.6 L508.3 330.1 L503.0 325.6 L499.5 323.3 L494.2 318.8 L492.8 314.3 L489.7 306.6 L494.2 300.6 L495.5 293.7 L496.4 289.0 L494.2 284.3 L491.7 278.2 L494.2 272.5 L496.4 264.4 L500.8 259.0 L503.0 253.1 L508.8 246.7 L516.3 242.7 L522.9 237.2 L524.5 231.1 L523.8 225.4 L529.5 216.5 L536.6 212.2 L539.7 206.9Z"/>
<path class="l" d="M604.3 355.7 L606.7 355.9 L606.0 358.1 L604.5 357.7Z"/>
<path class="w" d="M159.9 138.2 L166.9 138.8 L176.2 135.6 L179.8 133.6 L184.6 139.5 L191.3 139.5 L193.0 136.9 L192.1 132.3 L187.7 130.4 L184.2 125.0 L176.7 125.7 L171.4 129.7 L165.6 134.3Z"/>
<path class="w" d="M178.9 169.0 L180.2 164.3 L178.9 158.2 L179.8 152.1 L182.4 147.1 L186.8 142.7 L191.3 143.9 L189.0 149.6 L186.0 153.3 L184.6 159.4 L186.0 164.9 L182.9 169.0Z"/>
<path class="w" d="M192.6 143.9 L197.9 143.3 L204.5 142.7 L210.7 143.3 L213.4 149.0 L212.5 152.1 L207.6 149.6 L205.9 155.2 L202.8 161.3 L201.9 158.2 L198.8 155.8 L197.4 151.5 L198.3 148.3 L194.4 145.2Z"/>
<path class="w" d="M197.9 169.0 L202.3 170.2 L206.7 170.2 L213.4 166.7 L217.3 162.5 L212.5 163.7 L205.4 165.5 L200.1 167.3Z"/>
<path class="w" d="M214.3 159.4 L216.9 160.1 L224.4 159.8 L230.2 158.2 L229.7 153.9 L224.4 155.2 L217.8 155.8Z"/>
<path class="w" d="M139.1 112.7 L140.4 105.7 L136.0 94.9 L132.9 89.0 L129.4 91.2 L131.1 99.3 L136.0 107.8Z"/>
<path class="w" d="M250.5 324.7 L253.2 325.1 L252.3 331.4 L248.7 330.1Z"/>
<path class="w" d="M186.8 318.8 L191.3 321.1 L192.1 323.3 L187.7 321.5Z"/>
<path class="w" d="M49.8 29.6 L56.4 31.0 L65.2 28.7 L74.1 25.0 L85.1 19.4 L82.9 12.7 L76.3 15.6 L67.4 18.5 L60.8 16.6 L54.2 24.1 L48.9 27.8Z"/>
<path class="w" d="M74.1 51.6 L85.1 46.9 L96.2 44.3 L95.7 46.9 L87.3 49.5 L75.4 53.7Z"/>
<path class="w" d="M113.9 68.8 L117.0 64.0 L116.5 55.8 L113.9 56.6 L112.1 64.0Z"/>
<path class="w" d="M109.0 56.6 L112.5 52.4 L111.2 49.9 L107.7 54.1Z"/>
<path class="w" d="M124.0 104.3 L126.7 102.2 L124.9 94.9 L122.3 95.6 L123.2 102.2Z"/>
<path class="w" d="M130.2 114.8 L132.9 112.7 L130.2 104.3 L128.0 105.7Z"/>
<path class="w" d="M175.8 119.6 L178.0 116.2 L174.9 114.1 L172.7 116.9Z"/>
<path class="w" d="M240.8 112.7 L244.3 107.1 L242.6 106.4 L239.0 111.4Z"/>
<path class="w" d="M277.5 89.0 L286.3 87.5 L285.0 82.9 L278.8 83.7Z"/>
<path class="w" d="M299.6 92.7 L310.7 89.7 L309.8 87.5 L300.9 90.4Z"/>
<path class="w" d="M145.7 123.0 L150.1 121.7 L148.8 117.6 L146.2 118.9Z"/>
<path class="w" d="M208.9 249.7 L210.7 248.7 L209.8 247.2 L208.5 248.2Z"/>
<path class="w" d="M67.9 173.2 L71.0 173.8 L70.1 169.6 L68.3 170.2Z"/>
<path class="sb" d="M36.5 123.0 L36.5 38.6 L116.1 38.6 L147.9 39.5"/>
<path class="sb" d="M80.7 123.0 L80.7 38.6"/>
<path class="sb" d="M118.7 123.0 L117.9 72.0 L116.1 38.6"/>
<path class="sb" d="M146.4 123.0 L146.4 95.6 L173.6 65.2"/>
<path class="sb" d="M215.6 143.9 L215.6 105.7 L215.1 83.7"/>
<path class="sb" d="M-52.0 38.6 L36.5 38.6"/>
<path class="sb" d="M71.9 38.6 L80.7 0.9"/>
<path class="sb" d="M267.3 135.8 L262.0 129.7"/>
<path class="sb" d="M281.9 105.0 L271.3 95.6 L267.3 84.4 L282.4 35.9"/>
<path class="sb" d="M314.6 106.4 L281.9 105.0"/>
<path class="sb" d="M284.1 141.4 L281.9 143.6 L280.6 147.1"/>
<path class="sb" d="M18.8 141.1 L40.9 142.7 L50.2 142.7"/>
<path class="sb" d="M49.6 142.7 L49.6 123.0"/>
<path class="sb" d="M17.9 167.3 L76.1 167.3"/>
<path class="sb" d="M54.0 123.0 L54.0 130.4 L60.4 138.8 L61.7 145.8 L65.7 152.7 L76.1 152.1"/>
<path class="sb" d="M76.1 149.0 L107.0 149.0"/>
<path class="sb" d="M107.0 123.0 L107.0 173.2"/>
<path class="sb" d="M107.0 173.2 L115.9 173.2 L115.9 195.9"/>
<path class="sb" d="M76.1 149.0 L76.1 173.2 L107.0 173.2"/>
<path class="sb" d="M62.8 167.3 L62.8 195.9 L60.4 206.3"/>
<path class="sb" d="M62.8 195.9 L115.9 195.9"/>
<path class="sb" d="M84.9 173.2 L84.9 226.3"/>
<path class="sb" d="M111.4 195.9 L111.4 222.8 L95.7 222.8"/>
<path class="sb" d="M36.5 167.3 L36.5 184.7 L60.4 206.9 L59.9 219.1"/>
<path class="sb" d="M76.1 173.2 L62.8 173.2"/>
<path class="sb" d="M107.0 143.0 L140.0 143.0"/>
<path class="sb" d="M137.3 123.0 L140.0 143.0 L140.4 158.2"/>
<path class="sb" d="M107.0 161.3 L131.6 161.3 L140.4 164.3"/>
<path class="sb" d="M115.9 179.0 L145.7 179.0"/>
<path class="sb" d="M115.9 195.9 L148.8 195.9"/>
<path class="sb" d="M111.4 198.7 L124.9 198.7 L124.9 209.2 L149.2 214.4"/>
<path class="sb" d="M148.8 179.0 L148.8 214.4"/>
<path class="sb" d="M151.3 214.4 L151.3 234.6"/>
<path class="sb" d="M151.3 217.5 L163.8 217.5"/>
<path class="sb" d="M143.5 175.5 L163.0 175.5"/>
<path class="sb" d="M140.4 158.2 L163.8 158.2"/>
<path class="sb" d="M159.0 138.2 L159.0 142.7 L156.8 145.8 L163.8 158.2"/>
<path class="sb" d="M166.5 164.3 L178.9 164.3"/>
<path class="sb" d="M163.8 158.2 L168.3 167.3 L163.0 176.7 L173.1 195.9"/>
<path class="sb" d="M148.8 198.7 L168.5 198.7"/>
<path class="sb" d="M180.2 168.7 L180.2 187.6 L178.0 191.5"/>
<path class="sb" d="M192.1 169.0 L192.1 184.1"/>
<path class="sb" d="M180.2 169.0 L197.9 169.0"/>
<path class="sb" d="M173.1 195.9 L178.0 191.5 L184.6 190.9 L187.7 188.7 L192.1 184.1 L197.9 187.0 L201.9 188.1 L205.0 182.4 L210.7 175.5"/>
<path class="sb" d="M211.1 167.3 L211.1 180.6 L231.9 180.6"/>
<path class="sb" d="M211.2 167.3 L233.9 167.3 L235.0 170.8 L236.8 171.1"/>
<path class="sb" d="M171.4 198.2 L205.9 198.2 L231.5 198.4"/>
<path class="sb" d="M205.9 198.2 L194.4 206.9"/>
<path class="sb" d="M167.8 206.9 L199.7 206.9"/>
<path class="sb" d="M177.1 206.9 L176.2 231.1"/>
<path class="sb" d="M188.6 206.9 L191.3 228.0"/>
<path class="sb" d="M179.8 228.0 L191.3 228.0 L191.7 229.5 L204.5 230.0 L206.7 229.5"/>
<path class="sb" d="M199.7 206.9 L208.9 222.3"/>
<path class="sb" d="M199.7 206.9 L208.9 206.1 L209.4 206.3 L219.8 213.0"/>
<path class="sb" d="M163.8 217.5 L162.1 228.0 L170.5 228.0 L170.9 232.1"/>
<path class="sb" d="M171.4 198.7 L168.7 206.3 L164.3 212.8 L163.8 217.5"/>
<path class="sb" d="M243.0 149.0 L243.0 163.1"/>
<path class="sb" d="M251.0 149.0 L246.5 162.9"/>
<path class="sb" d="M254.5 160.7 L252.7 147.1"/>
<path class="sb" d="M242.1 162.9 L253.6 162.5"/>
<path class="sb" d="M242.1 167.3 L249.6 167.3 L251.4 170.2"/>
<path class="sb" d="M249.6 167.3 L249.4 171.4"/>
<path class="sb" d="M215.6 183.6 L211.2 180.6"/>
<path class="sb" d="M223.1 183.0 L215.6 183.6 L212.0 188.7 L205.0 193.2 L201.9 188.1"/>
<path class="sb" d="M231.9 180.6 L231.9 187.8 L235.3 187.8"/>
<path class="sb" d="M236.8 171.1 L240.3 173.8"/>
<path class="sb" d="M59.5 223.3 L59.9 219.1"/>
<path class="sb" d="M84.9 226.3 L86.9 251.7 L93.1 261.5"/>
<path class="sb" d="M105.0 235.1 L108.6 249.2 L113.9 258.0 L120.5 272.5"/>
<path class="sb" d="M127.1 245.7 L123.6 261.9 L124.5 275.4 L131.6 283.9"/>
<path class="sb" d="M96.6 266.8 L105.9 273.9 L109.5 282.0 L119.2 286.7 L127.1 293.7"/>
<path class="sb" d="M151.5 300.1 L149.2 290.6"/>
<path class="sb" d="M157.2 288.5 L167.4 292.3"/>
<path class="sb" d="M167.4 277.3 L172.7 283.4 L172.9 292.3"/>
<path class="sb" d="M361.5 376.3 L356.6 394.4 L353.5 395.8 L349.6 407.8 L345.1 415.8 L343.8 430.3"/>
<path class="sb" d="M382.3 384.7 L385.8 392.2 L387.2 406.9 L380.5 414.5 L373.9 416.7 L362.4 417.6 L354.0 430.3"/>
<path class="sb" d="M402.6 393.5 L396.9 404.2 L403.5 410.5 L408.4 414.0"/>
<path class="sb" d="M309.8 405.1 L312.9 414.9 L295.2 413.6 L279.7 415.4"/>
<path class="sb" d="M324.8 383.3 L309.8 405.1 L310.7 441.7"/>
<path class="sb" d="M343.8 430.3 L328.3 443.1"/>
<path class="sb" d="M293.8 432.5 L286.3 414.5"/>
<path class="sb" d="M257.6 390.9 L264.2 406.0 L279.7 415.4"/>
<path class="sb" d="M324.8 383.3 L329.2 368.7 L335.0 362.6"/>
<path class="sb" d="M366.8 444.0 L388.0 441.7 L390.2 450.0"/>
<path class="sb" d="M354.0 430.3 L365.9 446.3"/>
<path class="wl" d="M22.3 127.7 L20.6 121.7 L16.1 116.9 L11.7 112.7 L4.6 109.3"/>
<path class="wl" d="M25.9 134.9 L25.0 130.4 L23.2 128.4"/>
<path class="cb" d="M21.9 123.0 L146.4 123.0 L146.4 120.3 L147.9 124.4 L153.7 125.7 L162.5 129.0 L170.9 129.7"/>
<path class="cb" d="M193.5 139.5 L197.9 142.7"/>
<path class="cb" d="M217.6 160.7 L217.6 159.4"/>
<path class="cb" d="M229.7 153.9 L236.8 149.0 L251.0 149.0 L253.6 147.1 L256.3 139.5 L261.1 133.3 L265.5 134.0 L267.3 135.8 L267.3 144.6 L269.1 147.7 L270.9 150.2"/>
<path class="cb" d="M49.3 220.0 L59.9 219.1 L76.3 226.3 L88.7 226.3 L88.7 223.9 L96.2 223.9 L105.0 235.1 L110.3 238.2 L114.3 234.1 L118.7 234.3 L123.6 243.2 L127.1 245.7 L128.9 251.2 L137.5 253.4"/>
<path class="cb" d="M159.4 307.5 L160.3 305.2 L161.6 300.1 L167.4 300.1 L166.9 296.4 L163.0 294.8 L164.8 292.3 L172.9 292.3 L176.7 289.0"/>
<path class="cb" d="M172.9 292.3 L172.7 301.1"/>
<path class="cb" d="M172.7 301.1 L172.0 307.9 L168.7 310.9"/>
<path class="cb" d="M172.0 307.9 L175.8 309.7 L178.9 310.2 L179.8 312.9"/>
<path class="cb" d="M199.2 305.6 L191.3 309.7 L186.8 314.3 L181.1 314.5"/>
<path class="cb" d="M197.0 323.8 L192.6 323.1 L188.2 322.9"/>
<path class="cb" d="M201.9 329.6 L200.5 335.5"/>
<path class="cb" d="M225.3 334.1 L222.7 340.4"/>
<path class="cb" d="M251.8 319.7 L247.0 322.9 L244.8 326.0 L242.6 331.4 L245.6 336.8 L247.0 339.5 L257.1 341.3 L260.2 345.3 L268.6 344.8 L267.3 352.4 L269.5 362.6 L271.3 367.0"/>
<path class="cb" d="M218.7 366.1 L224.9 370.5 L234.2 372.7 L241.7 378.0 L247.0 382.9 L257.6 390.9"/>
<path class="cb" d="M271.3 367.0 L259.8 367.4 L257.6 373.2 L260.2 377.1 L257.6 390.9"/>
<path class="cb" d="M212.0 387.3 L216.9 394.0 L220.9 387.3 L228.4 383.8 L234.2 372.7"/>
<path class="cb" d="M257.6 390.9 L244.3 401.1 L240.8 405.1 L244.8 412.7 L254.9 414.5 L254.9 421.2 L262.0 428.0 L263.3 434.8 L260.2 441.7 L262.0 447.7 L259.4 451.4 L256.3 454.6"/>
<path class="cb" d="M262.0 421.2 L273.9 415.8 L278.4 420.3 L282.4 428.0 L293.8 432.5 L300.0 433.0 L300.5 440.3 L309.3 445.4 L309.8 451.4"/>
<path class="cb" d="M301.8 334.6 L296.9 342.6 L295.6 346.1 L298.7 349.3 L288.5 355.9 L280.6 353.7 L271.3 367.0"/>
<path class="cb" d="M298.7 349.3 L302.7 352.4 L304.0 361.2 L310.7 365.7 L317.3 363.4 L326.1 362.1 L335.0 362.6 L339.0 353.7"/>
<path class="cb" d="M314.6 345.7 L311.1 357.2 L314.2 363.4"/>
<path class="cb" d="M328.3 347.5 L327.0 355.5 L328.3 362.6"/>
<path class="cb" d="M559.2 158.8 L567.1 163.1 L573.8 164.3 L581.3 164.6"/>
<path class="cb" d="M527.8 167.3 L531.3 167.3 L538.4 167.9 L536.6 173.2 L536.2 181.3 L534.0 182.4 L536.2 190.4 L534.0 194.8"/>
<path class="cb" d="M578.2 108.6 L585.7 114.1 L588.8 115.5 L592.8 119.6 L595.4 120.3 L603.4 123.0 L600.7 132.3 L593.7 141.4 L598.1 143.3 L600.7 154.6"/>
<path class="cb" d="M582.2 106.4 L587.0 106.1 L593.2 109.3 L594.1 114.8 L592.8 119.6"/>
<path class="cb" d="M593.7 91.6 L599.0 93.4 L597.6 100.7 L593.7 102.9 L593.2 109.3"/>
<path class="cb" d="M594.1 114.8 L595.4 120.3"/>
<path class="cb" d="M600.7 132.3 L609.6 132.7 L613.6 136.2 L621.1 135.6 L624.6 133.0 L628.2 125.0"/>
<path class="cb" d="M609.6 132.7 L609.1 140.1 L604.7 141.4 L598.1 143.3"/>
<path class="cb" d="M613.6 136.2 L622.4 138.2 L627.7 139.5"/>
<path class="cb" d="M605.2 79.8 L610.0 81.4"/>
<path class="cb" d="M616.7 48.2 L619.7 39.5 L622.4 29.6 L621.1 20.4 L621.5 7.8 L629.0 -4.2"/>
<path class="cb" d="M539.7 78.3 L534.8 82.9 L532.2 86.7 L539.3 86.7 L540.6 87.5"/>
<path class="cb" d="M553.4 72.8 L558.3 73.6 L555.2 76.7 L553.4 79.8"/>
<path class="cb" d="M508.8 244.7 L528.7 244.7 L528.7 239.2 L545.0 233.1 L551.2 224.9 L561.8 222.3 L559.2 206.9"/>
<path class="cb" d="M528.7 244.7 L528.7 246.7 L545.9 258.0 L593.7 284.3 L601.6 300.6 L620.2 312.9 L627.3 311.1 L631.2 314.8"/>
<path class="cb" d="M491.7 278.2 L509.6 275.8 L509.6 267.7 L514.1 265.3 L514.1 253.1 L528.7 246.7"/>
<path class="cb" d="M528.7 246.7 L538.4 258.5 L545.0 298.3 L518.5 305.2 L513.2 306.6 L494.2 299.2"/>
<path class="cb" d="M545.0 298.3 L542.8 302.9 L549.4 307.5 L563.6 303.8 L568.0 305.6 L572.9 303.8 L585.7 296.4 L585.7 285.7 L593.7 284.3"/>
<path class="cb" d="M513.2 306.6 L516.3 317.0 L511.9 317.0 L506.5 315.7 L500.4 315.7 L493.3 317.0"/>
<path class="cb" d="M492.8 314.3 L500.4 311.6 L493.7 311.6"/>
<path class="cb" d="M516.3 317.0 L529.5 322.0 L530.4 325.6 L532.2 326.9 L543.2 326.0 L548.1 329.6 L555.2 330.1 L554.3 323.3 L567.1 323.3 L571.1 323.3 L577.7 319.3 L583.0 320.2 L583.9 327.8 L579.1 332.3 L579.1 344.4"/>
<path class="cb" d="M508.3 330.1 L512.3 328.3 L517.6 327.8 L521.6 334.6 L516.3 341.3"/>
<path class="cb" d="M521.6 334.6 L529.5 338.6 L530.4 344.4 L534.0 353.0"/>
<path class="cb" d="M529.5 338.6 L531.3 336.3 L530.4 325.6"/>
<path class="cb" d="M554.3 323.3 L556.1 335.9 L553.0 344.8 L554.3 350.1"/>
<path class="cb" d="M567.1 323.3 L568.9 326.9 L569.3 335.5 L569.8 341.7 L572.4 345.3"/>
<path class="cb" d="M571.1 323.3 L574.2 344.8"/>
<path class="cb" d="M583.0 320.2 L585.7 312.0 L593.7 311.1 L606.9 314.8 L620.2 312.9 L629.0 313.8"/>
<path class="cb" d="M604.7 352.4 L609.1 343.5 L619.3 341.3 L621.5 335.0 L625.9 327.8 L629.9 318.8"/>
<path class="cb" d="M610.5 359.0 L617.1 362.6 L625.9 362.6 L637.9 363.4"/>
<path class="cb" d="M609.1 367.9 L617.1 367.9 L617.1 362.6"/>
<path class="cb" d="M611.3 385.6 L616.2 389.5 L620.2 394.4"/>
<path class="cb" d="M580.4 197.0 L603.8 196.5 L603.4 209.0 L600.3 216.5 L609.1 232.1 L611.3 258.0 L620.2 265.3 L629.0 268.7"/>
<path class="cb" d="M618.0 216.5 L611.3 225.4 L609.1 232.1"/>
<path class="cb" d="M621.5 399.3 L622.8 394.0 L625.1 392.6 L630.8 391.3"/>
<path class="rt" d="M202.2 243.3 L200.5 241.1 L198.8 238.9 L197.1 236.7 L195.4 234.5 L193.7 232.3 L192.0 230.0 L190.2 227.8 L188.5 225.6 L186.7 223.3 L184.9 221.1 L183.1 218.8 L181.2 216.6 L179.4 214.3 L177.5 212.1 L175.6 209.8 L173.7 207.5 L171.8 205.3 L169.8 203.0 L167.8 200.7 L165.8 198.4 L163.8 196.1 L161.8 193.9 L159.7 191.6 L157.6 189.3 L155.5 187.0 L153.4 184.7 L151.3 182.4 L149.1 180.1 L146.9 177.8 L144.7 175.5 L142.4 173.2 L140.1 170.9 L137.8 168.6 L135.5 166.3 L133.1 164.0 L130.7 161.7 L128.3 159.4 L125.8 157.1 L123.3 154.8 L120.8 152.5 L118.3 150.3 L115.7 148.0 L113.1 145.7 L110.4 143.4 L107.7 141.2 L105.0 138.9 L102.3 136.6 L99.5 134.4 L96.6 132.2 L93.8 129.9 L90.9 127.7 L87.9 125.5 L84.9 123.3 L81.9 121.1 L78.9 119.0 L75.8 116.8 L72.6 114.7 L69.5 112.5 L66.2 110.4 L63.0 108.3"/>
<path class="rt" d="M202.2 243.3 L200.0 241.3 L197.7 239.2 L195.5 237.1 L193.2 235.0 L190.9 232.9 L188.6 230.9 L186.2 228.8 L183.9 226.7 L181.5 224.7 L179.1 222.6 L176.7 220.5 L174.3 218.5 L171.8 216.4 L169.3 214.4 L166.8 212.3 L164.3 210.3 L161.8 208.3 L159.2 206.2 L156.6 204.2 L154.0 202.2 L151.3 200.2 L148.7 198.2 L146.0 196.2 L143.2 194.2 L140.5 192.2 L137.7 190.2 L134.9 188.3 L132.1 186.3 L129.3 184.4 L126.4 182.4 L123.5 180.5 L120.5 178.6 L117.6 176.7 L114.6 174.8 L111.6 173.0 L108.5 171.1 L105.4 169.3 L102.3 167.5 L99.2 165.7 L96.0 163.9 L92.8 162.1 L89.6 160.4 L86.3 158.7 L83.0 157.0 L79.7 155.3 L76.4 153.6 L73.0 152.0 L69.6 150.4 L66.1 148.8 L62.6 147.2 L59.1 145.7 L55.6 144.2 L52.0 142.7 L48.4 141.3 L44.8 139.9 L41.2 138.5 L37.5 137.1 L33.8 135.8 L30.0 134.5 L26.3 133.3"/>
<path class="rt" d="M202.2 243.3 L199.9 241.4 L197.5 239.5 L195.2 237.5 L192.8 235.6 L190.5 233.7 L188.1 231.8 L185.6 229.8 L183.2 227.9 L180.7 226.0 L178.3 224.1 L175.8 222.2 L173.3 220.3 L170.7 218.4 L168.2 216.6 L165.6 214.7 L163.0 212.8 L160.4 210.9 L157.7 209.1 L155.1 207.3 L152.4 205.4 L149.7 203.6 L147.0 201.8 L144.2 200.0 L141.4 198.2 L138.6 196.4 L135.8 194.6 L133.0 192.8 L130.1 191.1 L127.2 189.4 L124.3 187.6 L121.3 185.9 L118.4 184.2 L115.4 182.5 L112.4 180.9 L109.3 179.2 L106.2 177.6 L103.1 176.0 L100.0 174.4 L96.9 172.8 L93.7 171.2 L90.5 169.7 L87.3 168.2 L84.0 166.7 L80.8 165.2 L77.5 163.8 L74.1 162.3 L70.8 160.9 L67.4 159.5 L64.0 158.2 L60.6 156.9 L57.1 155.6 L53.6 154.3 L50.1 153.1 L46.6 151.9 L43.1 150.7 L39.5 149.5 L35.9 148.4 L32.3 147.3 L28.6 146.3 L25.0 145.3"/>
<path class="rt" d="M202.2 243.3 L192.8 236.7 L183.2 230.2 L173.4 223.8 L163.2 217.5 L152.9 211.4 L142.2 205.4 L131.2 199.6 L120.0 194.0 L108.4 188.7 L96.5 183.6 L84.4 178.8 L72.0 174.4"/>
<path class="rt" d="M202.2 243.3 L195.0 237.7 L187.7 232.0 L180.2 226.4 L172.6 220.9 L164.7 215.4 L156.7 210.0 L148.5 204.7 L140.1 199.5 L131.4 194.4 L122.6 189.4 L113.5 184.5 L104.3 179.8"/>
<path class="rt" d="M202.2 243.3 L197.9 237.5 L193.6 231.6 L189.1 225.7 L184.5 219.8 L179.8 213.8 L175.0 207.8 L170.1 201.8 L165.0 195.8 L159.7 189.7 L154.4 183.6 L148.8 177.5 L143.1 171.4"/>
<path class="rt" d="M202.2 243.3 L198.2 238.4 L194.1 233.4 L190.0 228.4 L185.8 223.4 L181.4 218.4 L177.0 213.4 L172.5 208.3 L167.9 203.3 L163.2 198.2 L158.4 193.2 L153.4 188.1 L148.3 183.0"/>
<path class="rt" d="M202.2 243.3 L198.9 236.1 L195.6 228.7 L192.2 221.3 L188.6 213.8 L184.9 206.2 L181.1 198.5 L177.2 190.6 L173.1 182.7 L168.9 174.6 L164.4 166.5 L159.8 158.2 L154.9 149.7"/>
<path class="rt" d="M202.2 243.3 L199.6 242.1 L197.0 240.8 L194.4 239.5 L191.8 238.3 L189.1 237.0 L186.5 235.8 L183.8 234.6 L181.1 233.3 L178.5 232.1 L175.8 230.9 L173.0 229.8 L170.3 228.6 L167.6 227.4 L164.8 226.3 L162.1 225.2 L159.3 224.1 L156.5 223.0 L153.7 221.9 L150.9 220.8 L148.1 219.7 L145.2 218.7 L142.4 217.7 L139.5 216.6 L136.6 215.6 L133.7 214.7 L130.8 213.7 L127.9 212.7 L125.0 211.8 L122.0 210.9 L119.1 210.0 L116.1 209.1 L113.1 208.2 L110.2 207.4 L107.2 206.6 L104.2 205.8 L101.1 205.0 L98.1 204.2 L95.1 203.5 L92.0 202.7 L89.0 202.0 L85.9 201.3 L82.8 200.7 L79.7 200.0 L76.6 199.4 L73.5 198.8 L70.4 198.2 L67.3 197.6 L64.1 197.1 L61.0 196.6 L57.8 196.1 L54.7 195.6 L51.5 195.2 L48.3 194.8 L45.2 194.4 L42.0 194.0 L38.8 193.7 L35.6 193.3 L32.4 193.0 L29.2 192.7 L26.0 192.5"/>
<path class="rt" d="M202.2 243.3 L200.0 242.3 L197.8 241.4 L195.6 240.4 L193.4 239.4 L191.2 238.4 L189.0 237.5 L186.8 236.5 L184.5 235.6 L182.3 234.6 L180.0 233.7 L177.8 232.8 L175.5 231.9 L173.2 231.0 L171.0 230.1 L168.7 229.2 L166.4 228.3 L164.1 227.4 L161.8 226.6 L159.4 225.7 L157.1 224.9 L154.8 224.1 L152.4 223.2 L150.1 222.4 L147.7 221.6 L145.3 220.8 L142.9 220.1 L140.6 219.3 L138.2 218.5 L135.8 217.8 L133.3 217.1 L130.9 216.3 L128.5 215.6 L126.1 214.9 L123.6 214.2 L121.2 213.6 L118.7 212.9 L116.3 212.2 L113.8 211.6 L111.3 211.0 L108.8 210.4 L106.3 209.8 L103.8 209.2 L101.3 208.6 L98.8 208.0 L96.3 207.5 L93.8 207.0 L91.3 206.4 L88.7 205.9 L86.2 205.4 L83.7 205.0 L81.1 204.5 L78.6 204.1 L76.0 203.6 L73.4 203.2 L70.9 202.8 L68.3 202.4 L65.7 202.0 L63.1 201.7 L60.5 201.3 L57.9 201.0"/>
<path class="rt" d="M202.2 243.3 L199.7 242.5 L197.3 241.6 L194.8 240.7 L192.3 239.8 L189.9 239.0 L187.4 238.2 L184.9 237.3 L182.4 236.5 L179.9 235.7 L177.3 234.9 L174.8 234.1 L172.3 233.4 L169.7 232.6 L167.2 231.8 L164.6 231.1 L162.1 230.4 L159.5 229.7 L156.9 229.0 L154.3 228.3 L151.7 227.6 L149.1 226.9 L146.5 226.3 L143.9 225.7 L141.3 225.0 L138.7 224.4 L136.0 223.8 L133.4 223.2 L130.7 222.7 L128.1 222.1 L125.4 221.6 L122.7 221.1 L120.1 220.5 L117.4 220.1 L114.7 219.6 L112.0 219.1 L109.3 218.6 L106.6 218.2 L103.9 217.8 L101.2 217.4 L98.5 217.0 L95.8 216.6 L93.1 216.3 L90.3 215.9 L87.6 215.6 L84.9 215.3 L82.1 215.0 L79.4 214.7 L76.6 214.4 L73.9 214.2 L71.1 214.0 L68.4 213.7 L65.6 213.5 L62.9 213.4 L60.1 213.2 L57.4 213.0 L54.6 212.9 L51.8 212.8 L49.1 212.7 L46.3 212.6 L43.5 212.6"/>
<path class="rt" d="M202.2 243.3 L199.8 242.6 L197.4 241.8 L195.0 241.1 L192.5 240.4 L190.1 239.6 L187.7 238.9 L185.2 238.2 L182.8 237.5 L180.3 236.9 L177.9 236.2 L175.4 235.5 L172.9 234.9 L170.5 234.2 L168.0 233.6 L165.5 233.0 L163.0 232.4 L160.5 231.8 L158.0 231.2 L155.5 230.7 L153.0 230.1 L150.4 229.6 L147.9 229.0 L145.4 228.5 L142.8 228.0 L140.3 227.5 L137.7 227.0 L135.2 226.6 L132.6 226.1 L130.0 225.7 L127.5 225.3 L124.9 224.8 L122.3 224.4 L119.7 224.1 L117.1 223.7 L114.6 223.3 L112.0 223.0 L109.4 222.6 L106.8 222.3 L104.2 222.0 L101.5 221.7 L98.9 221.5 L96.3 221.2 L93.7 220.9 L91.1 220.7 L88.5 220.5 L85.8 220.3 L83.2 220.1 L80.6 219.9 L77.9 219.8 L75.3 219.6 L72.7 219.5 L70.0 219.4 L67.4 219.3 L64.8 219.2 L62.1 219.1 L59.5 219.0 L56.8 219.0 L54.2 219.0 L51.6 219.0 L48.9 219.0"/>
<path class="rt" d="M202.2 243.3 L192.0 239.8 L181.6 236.5 L171.1 233.3 L160.5 230.4 L149.7 227.6 L138.9 225.1 L127.9 222.8 L116.9 220.8 L105.7 219.0 L94.5 217.5 L83.2 216.3 L71.8 215.3"/>
<path class="rt" d="M202.2 243.3 L198.2 239.7 L194.1 236.0 L190.0 232.3 L185.9 228.7 L181.6 225.0 L177.3 221.4 L173.0 217.8 L168.5 214.2 L164.0 210.6 L159.5 207.0 L154.8 203.4 L150.1 199.9"/>
<path class="rt" d="M202.2 243.3 L197.2 241.1 L192.2 238.8 L187.1 236.6 L182.0 234.5 L176.8 232.3 L171.6 230.3 L166.4 228.2 L161.1 226.3 L155.8 224.3 L150.4 222.5 L145.0 220.6 L139.5 218.9"/>
<path class="rt" d="M202.2 243.3 L197.1 241.0 L191.9 238.7 L186.8 236.4 L181.5 234.2 L176.2 232.0 L170.9 229.8 L165.5 227.7 L160.1 225.7 L154.7 223.7 L149.2 221.8 L143.6 219.9 L138.0 218.1"/>
<path class="rt" d="M202.2 243.3 L196.7 242.1 L191.2 240.9 L185.7 239.8 L180.2 238.7 L174.6 237.7 L169.1 236.7 L163.5 235.8 L157.9 234.9 L152.2 234.1 L146.6 233.4 L140.9 232.7 L135.2 232.1"/>
<path class="rt" d="M202.2 243.3 L196.4 242.3 L190.6 241.4 L184.8 240.5 L178.9 239.7 L173.1 238.9 L167.2 238.3 L161.3 237.6 L155.4 237.1 L149.5 236.6 L143.6 236.1 L137.6 235.8 L131.7 235.5"/>
<path class="rt" d="M202.2 243.3 L197.5 242.3 L192.9 241.2 L188.2 240.3 L183.5 239.3 L178.8 238.4 L174.1 237.5 L169.4 236.7 L164.7 235.9 L159.9 235.2 L155.1 234.5 L150.3 233.8 L145.5 233.2"/>
<path class="rt" d="M202.2 243.3 L197.6 242.4 L192.9 241.5 L188.3 240.7 L183.6 239.9 L178.9 239.1 L174.2 238.4 L169.5 237.7 L164.8 237.0 L160.1 236.4 L155.3 235.9 L150.6 235.4 L145.8 234.9"/>
<path class="rt" d="M202.2 243.3 L201.1 239.1 L200.0 234.7 L198.9 230.4 L197.8 226.0 L196.7 221.6 L195.5 217.1 L194.3 212.6 L193.1 208.1 L191.9 203.5 L190.6 198.8 L189.3 194.1 L188.0 189.4"/>
<path class="rt" d="M202.2 243.3 L199.6 238.7 L197.0 234.1 L194.3 229.5 L191.6 224.8 L188.8 220.1 L185.9 215.3 L183.0 210.5 L180.1 205.7 L177.0 200.9 L173.9 196.0 L170.8 191.1 L167.5 186.1"/>
<path class="rt" d="M202.2 243.3 L202.5 239.0 L202.8 234.6 L203.1 230.2 L203.5 225.7 L203.8 221.2 L204.1 216.6 L204.5 212.0 L204.8 207.4 L205.2 202.7 L205.6 197.9 L205.9 193.1 L206.3 188.3"/>
<path class="rt" d="M202.2 243.3 L203.9 239.3 L205.7 235.3 L207.5 231.2 L209.3 227.1 L211.2 222.9 L213.1 218.8 L215.0 214.6 L217.0 210.4 L219.0 206.1 L221.0 201.8 L223.1 197.5 L225.2 193.2"/>
<path class="rt" d="M202.2 243.3 L204.3 239.6 L206.5 235.7 L208.7 231.9 L210.9 228.1 L213.2 224.2 L215.5 220.3 L217.8 216.4 L220.2 212.5 L222.6 208.5 L225.1 204.6 L227.6 200.6 L230.2 196.6"/>
<path class="rt" d="M202.2 243.3 L200.8 239.9 L199.3 236.5 L197.9 233.0 L196.4 229.5 L194.9 226.0 L193.4 222.5 L191.9 218.9 L190.3 215.3 L188.7 211.7 L187.1 208.1 L185.5 204.5 L183.8 200.8"/>
<path class="rt" d="M202.2 243.3 L201.7 240.1 L201.2 236.8 L200.7 233.4 L200.1 230.1 L199.6 226.7 L199.1 223.3 L198.5 219.9 L198.0 216.5 L197.4 213.0 L196.9 209.5 L196.3 206.0 L195.7 202.5"/>
<path class="rt" d="M202.2 243.3 L199.6 240.3 L197.0 237.3 L194.4 234.2 L191.7 231.2 L189.1 228.1 L186.3 225.1 L183.6 222.0 L180.8 218.9 L178.0 215.9 L175.1 212.8 L172.2 209.7 L169.2 206.7"/>
<path class="rt" d="M202.2 243.3 L200.7 240.5 L199.2 237.7 L197.7 234.9 L196.2 232.0 L194.7 229.2 L193.1 226.3 L191.6 223.4 L190.0 220.5 L188.4 217.6 L186.7 214.7 L185.1 211.8 L183.4 208.8"/>
<path class="rt" d="M202.2 243.3 L200.7 241.0 L199.2 238.6 L197.7 236.2 L196.2 233.9 L194.7 231.5 L193.1 229.1 L191.6 226.7 L190.0 224.3 L188.4 221.9 L186.8 219.4 L185.2 217.0 L183.5 214.6"/>
<path class="rt" d="M202.2 243.3 L201.5 241.0 L200.8 238.6 L200.2 236.2 L199.5 233.8 L198.8 231.4 L198.1 228.9 L197.4 226.5 L196.7 224.1 L196.0 221.6 L195.3 219.1 L194.5 216.7 L193.8 214.2"/>
<path class="rt" d="M202.2 243.3 L202.3 240.4 L202.4 237.5 L202.5 234.6 L202.6 231.7 L202.7 228.7 L202.8 225.7 L203.0 222.7 L203.1 219.7 L203.2 216.7 L203.3 213.6 L203.4 210.5 L203.6 207.4"/>
<path class="rt" d="M202.2 243.3 L202.7 240.3 L203.3 237.3 L203.8 234.2 L204.4 231.1 L205.0 228.0 L205.6 224.9 L206.1 221.8 L206.7 218.6 L207.3 215.4 L208.0 212.2 L208.6 209.0 L209.2 205.7"/>
<path class="rt" d="M202.2 243.3 L203.5 240.0 L204.7 236.7 L206.1 233.3 L207.4 229.9 L208.7 226.5 L210.1 223.1 L211.5 219.7 L212.9 216.2 L214.3 212.7 L215.8 209.2 L217.2 205.7 L218.7 202.1"/>
<path class="rt" d="M202.2 243.3 L203.8 240.7 L205.4 238.0 L207.1 235.3 L208.7 232.6 L210.4 229.9 L212.1 227.2 L213.8 224.5 L215.5 221.8 L217.3 219.1 L219.0 216.3 L220.8 213.6 L222.7 210.8"/>
<path class="rt" d="M202.2 243.3 L203.4 240.9 L204.7 238.5 L206.0 236.1 L207.3 233.7 L208.6 231.2 L209.9 228.8 L211.2 226.3 L212.6 223.9 L213.9 221.4 L215.3 218.9 L216.7 216.4 L218.1 213.9"/>
<path class="rt" d="M202.2 243.3 L203.1 241.3 L203.9 239.2 L204.8 237.1 L205.7 235.0 L206.6 232.9 L207.5 230.8 L208.5 228.7 L209.4 226.6 L210.3 224.5 L211.3 222.4 L212.2 220.2 L213.2 218.1"/>
<path class="rt" d="M202.2 243.3 L199.4 242.4 L196.6 241.5 L193.8 240.6 L190.9 239.7 L188.1 238.9 L185.3 238.0 L182.4 237.2 L179.5 236.3 L176.7 235.5 L173.8 234.7 L170.9 233.9 L168.0 233.2"/>
<path class="rt" d="M202.2 243.3 L199.8 242.3 L197.5 241.2 L195.1 240.1 L192.7 239.1 L190.3 238.0 L187.9 237.0 L185.5 236.0 L183.1 235.0 L180.6 234.0 L178.2 233.0 L175.7 232.0 L173.3 231.0"/>
<path class="rt" d="M202.2 243.3 L200.5 242.3 L198.8 241.2 L197.1 240.1 L195.4 239.1 L193.7 238.0 L192.0 237.0 L190.3 235.9 L188.6 234.9 L186.8 233.8 L185.1 232.8 L183.3 231.7 L181.6 230.7"/>
<path class="rt" d="M202.2 243.3 L203.1 244.1 L204.0 244.9 L204.8 245.7 L205.7 246.5 L206.6 247.3 L207.5 248.1 L208.4 248.9 L209.2 249.6 L210.1 250.4 L211.0 251.2 L211.8 252.0 L212.7 252.8"/>
<path class="rt" d="M202.2 243.3 L203.0 244.2 L203.9 245.2 L204.7 246.1 L205.5 247.0 L206.4 247.9 L207.2 248.8 L208.0 249.7 L208.8 250.6 L209.6 251.5 L210.5 252.4 L211.3 253.3 L212.1 254.2"/>
<path class="rt" d="M202.2 243.3 L202.5 244.8 L202.8 246.2 L203.1 247.6 L203.3 249.0 L203.6 250.4 L203.9 251.8 L204.2 253.2 L204.5 254.6 L204.8 256.0 L205.0 257.4 L205.3 258.8 L205.6 260.2"/>
<path class="rt" d="M202.2 243.3 L202.2 245.4 L202.3 247.5 L202.3 249.5 L202.4 251.6 L202.4 253.6 L202.5 255.7 L202.5 257.7 L202.5 259.7 L202.6 261.8 L202.6 263.8 L202.7 265.8 L202.7 267.8"/>
<path class="rt" d="M202.2 243.3 L200.5 246.2 L198.8 249.1 L197.2 251.9 L195.5 254.7 L193.9 257.6 L192.3 260.4 L190.7 263.2 L189.1 266.0 L187.6 268.8 L186.0 271.5 L184.5 274.3 L182.9 277.1"/>
<path class="rt" d="M202.2 243.3 L195.7 246.5 L189.3 249.8 L183.0 253.1 L176.7 256.4 L170.5 259.8 L164.4 263.3 L158.4 266.7 L152.4 270.2 L146.4 273.8 L140.6 277.4 L134.8 281.0 L129.0 284.6"/>
<path class="rt" d="M202.2 243.3 L202.6 247.0 L203.1 250.5 L203.5 254.1 L204.0 257.7 L204.4 261.2 L204.9 264.7 L205.3 268.2 L205.7 271.6 L206.1 275.1 L206.5 278.5 L206.9 281.9 L207.4 285.3"/>
<path class="rt" d="M202.2 243.3 L204.0 247.3 L205.8 251.1 L207.6 255.0 L209.3 258.9 L211.1 262.7 L212.8 266.5 L214.4 270.3 L216.1 274.1 L217.8 277.8 L219.4 281.6 L221.0 285.3 L222.6 289.0"/>
<path class="rt" d="M202.2 243.3 L207.3 247.1 L212.3 250.9 L217.2 254.7 L222.1 258.5 L226.9 262.3 L231.6 266.1 L236.3 270.0 L241.0 273.8 L245.6 277.7 L250.1 281.6 L254.6 285.5 L259.0 289.3"/>
<path class="rt" d="M202.2 243.3 L207.8 247.0 L213.3 250.7 L218.7 254.4 L224.1 258.1 L229.4 261.9 L234.6 265.6 L239.8 269.4 L244.9 273.3 L250.0 277.1 L255.0 281.0 L259.9 284.8 L264.8 288.7"/>
<path class="rt" d="M202.2 243.3 L208.7 247.0 L215.1 250.6 L221.5 254.3 L227.7 258.1 L233.9 261.9 L240.0 265.7 L246.1 269.5 L252.1 273.4 L258.0 277.4 L263.8 281.3 L269.6 285.3 L275.3 289.3"/>
<path class="rt" d="M202.2 243.3 L203.5 251.2 L204.8 258.9 L206.0 266.5 L207.2 274.0 L208.4 281.5 L209.5 288.9 L210.7 296.2 L211.8 303.5 L212.9 310.7 L214.0 317.8 L215.0 324.9 L216.1 332.0"/>
<path class="rt" d="M202.2 243.3 L205.7 252.9 L209.1 262.3 L212.4 271.6 L215.6 280.8 L218.8 289.9 L221.8 298.8 L224.8 307.8 L227.8 316.6 L230.7 325.4 L233.6 334.1 L236.4 342.8 L239.2 351.5"/>
<path class="rt" d="M202.2 243.3 L204.3 236.0 L206.4 228.5 L208.6 221.0 L210.8 213.3 L213.2 205.5 L215.6 197.6 L218.2 189.6 L220.8 181.4 L223.5 173.0 L226.4 164.5 L229.4 155.8 L232.5 147.0"/>
<path class="rt" d="M202.2 243.3 L204.8 235.9 L207.5 228.3 L210.4 220.7 L213.3 212.9 L216.3 205.0 L219.4 197.0 L222.6 188.9 L226.0 180.6 L229.5 172.2 L233.2 163.7 L237.0 154.9 L241.0 146.0"/>
<path class="rt" d="M202.2 243.3 L206.3 236.0 L210.6 228.6 L215.0 221.1 L219.6 213.6 L224.3 206.0 L229.2 198.3 L234.2 190.5 L239.5 182.6 L244.9 174.6 L250.6 166.6 L256.6 158.4 L262.8 150.2"/>
<path class="rt" d="M202.2 243.3 L205.0 236.3 L208.0 229.2 L211.0 221.9 L214.1 214.6 L217.4 207.2 L220.7 199.7 L224.2 192.1 L227.8 184.4 L231.5 176.6 L235.4 168.6 L239.4 160.5 L243.7 152.3"/>
<path class="rt" d="M202.2 243.3 L206.0 236.6 L209.8 229.7 L213.8 222.8 L217.9 215.8 L222.1 208.8 L226.5 201.6 L231.0 194.4 L235.7 187.2 L240.5 179.8 L245.6 172.4 L250.8 164.9 L256.2 157.3"/>
<path class="rt" d="M202.2 243.3 L205.6 236.9 L209.2 230.4 L212.8 223.8 L216.6 217.2 L220.4 210.5 L224.4 203.7 L228.5 196.9 L232.7 190.0 L237.1 183.0 L241.6 176.0 L246.3 168.9 L251.2 161.7"/>
<path class="rt" d="M202.2 243.3 L205.8 237.1 L209.5 230.8 L213.3 224.5 L217.2 218.2 L221.3 211.7 L225.4 205.2 L229.7 198.7 L234.1 192.1 L238.6 185.4 L243.3 178.7 L248.1 171.9 L253.2 165.1"/>
<path class="rt" d="M202.2 243.3 L205.7 237.4 L209.3 231.4 L213.0 225.4 L216.8 219.3 L220.7 213.2 L224.7 207.0 L228.8 200.8 L233.0 194.5 L237.3 188.2 L241.8 181.8 L246.5 175.4 L251.3 168.9"/>
<path class="rt" d="M202.2 243.3 L204.9 237.0 L207.7 230.7 L210.6 224.2 L213.5 217.7 L216.6 211.1 L219.7 204.5 L222.9 197.8 L226.3 190.9 L229.7 184.0 L233.3 177.0 L237.0 170.0 L240.8 162.8"/>
<path class="rt" d="M202.2 243.3 L204.2 236.9 L206.2 230.5 L208.3 223.9 L210.5 217.3 L212.7 210.5 L215.0 203.7 L217.4 196.8 L219.9 189.8 L222.4 182.7 L225.0 175.4 L227.8 168.1 L230.6 160.6"/>
<path class="rt" d="M202.2 243.3 L203.7 237.0 L205.2 230.5 L206.8 223.9 L208.5 217.3 L210.2 210.6 L211.9 203.8 L213.7 196.9 L215.6 189.8 L217.5 182.7 L219.5 175.4 L221.5 168.1 L223.7 160.5"/>
<path class="rt" d="M202.2 243.3 L203.4 237.0 L204.6 230.7 L205.8 224.2 L207.1 217.7 L208.4 211.0 L209.8 204.3 L211.2 197.5 L212.6 190.6 L214.1 183.5 L215.7 176.4 L217.3 169.1 L219.0 161.6"/>
<path class="rt" d="M202.2 243.3 L203.1 236.7 L204.0 230.0 L204.9 223.3 L205.9 216.4 L206.9 209.4 L208.0 202.3 L209.0 195.1 L210.1 187.8 L211.3 180.4 L212.5 172.8 L213.7 165.0 L215.0 157.1"/>
<path class="rt" d="M202.2 243.3 L201.9 237.4 L201.7 231.3 L201.4 225.2 L201.1 219.0 L200.8 212.7 L200.5 206.4 L200.2 199.9 L199.9 193.4 L199.6 186.7 L199.3 179.9 L198.9 173.0 L198.6 166.0"/>
<path class="rt" d="M202.2 243.3 L202.9 237.4 L203.7 231.4 L204.5 225.4 L205.3 219.2 L206.1 213.0 L206.9 206.7 L207.8 200.3 L208.7 193.8 L209.6 187.2 L210.6 180.5 L211.6 173.7 L212.6 166.8"/>
<path class="rt" d="M202.2 243.3 L202.5 237.9 L202.9 232.4 L203.3 226.9 L203.6 221.3 L204.0 215.6 L204.4 209.8 L204.8 204.0 L205.2 198.1 L205.6 192.1 L206.1 186.1 L206.5 179.9 L207.0 173.6"/>
<path class="rt" d="M202.2 243.3 L202.4 237.7 L202.6 232.0 L202.8 226.2 L203.1 220.4 L203.3 214.5 L203.6 208.5 L203.8 202.5 L204.1 196.3 L204.3 190.1 L204.6 183.7 L204.9 177.3 L205.2 170.8"/>
<path class="rt" d="M202.2 243.3 L202.9 238.1 L203.7 232.8 L204.5 227.4 L205.2 222.0 L206.1 216.5 L206.9 211.0 L207.7 205.4 L208.6 199.7 L209.5 193.9 L210.4 188.1 L211.4 182.2 L212.4 176.1"/>
<path class="rt" d="M202.2 243.3 L202.1 238.3 L201.9 233.2 L201.8 228.1 L201.7 222.9 L201.6 217.6 L201.4 212.3 L201.3 206.9 L201.2 201.5 L201.0 196.0 L200.9 190.4 L200.7 184.7 L200.6 179.0"/>
<path class="rt" d="M202.2 243.3 L204.4 237.7 L206.6 231.9 L208.9 226.2 L211.2 220.3 L213.6 214.4 L216.0 208.5 L218.5 202.4 L221.1 196.3 L223.8 190.2 L226.5 183.9 L229.4 177.6 L232.3 171.2"/>
<path class="rt" d="M202.2 243.3 L205.3 237.3 L208.5 231.3 L211.8 225.2 L215.1 219.1 L218.6 212.8 L222.1 206.6 L225.7 200.2 L229.5 193.8 L233.3 187.4 L237.3 180.9 L241.5 174.3 L245.7 167.6"/>
<path class="rt" d="M202.2 243.3 L205.1 237.7 L208.0 232.1 L211.0 226.4 L214.1 220.6 L217.3 214.8 L220.6 208.9 L223.9 203.0 L227.3 197.0 L230.9 191.0 L234.5 184.9 L238.2 178.8 L242.1 172.6"/>
<path class="rt" d="M202.2 243.3 L204.8 237.9 L207.4 232.5 L210.1 226.9 L212.9 221.4 L215.7 215.8 L218.6 210.1 L221.6 204.4 L224.6 198.6 L227.7 192.8 L231.0 186.9 L234.3 181.0 L237.7 175.0"/>
<path class="rt" d="M202.2 243.3 L205.3 237.6 L208.4 231.9 L211.6 226.1 L214.9 220.3 L218.3 214.4 L221.8 208.4 L225.3 202.4 L229.0 196.4 L232.8 190.3 L236.7 184.1 L240.7 177.9 L244.8 171.6"/>
<path class="rt" d="M202.2 243.3 L205.2 237.8 L208.3 232.3 L211.5 226.7 L214.7 221.1 L218.0 215.4 L221.4 209.7 L224.9 204.0 L228.5 198.1 L232.2 192.3 L236.0 186.4 L239.9 180.4 L243.9 174.4"/>
<path class="rt" d="M202.2 243.3 L205.0 237.9 L207.9 232.5 L210.8 227.0 L213.8 221.4 L216.9 215.8 L220.1 210.2 L223.3 204.5 L226.6 198.8 L230.0 193.0 L233.5 187.1 L237.2 181.2 L240.9 175.3"/>
<path class="rt" d="M202.2 243.3 L204.8 238.4 L207.4 233.5 L210.1 228.5 L212.9 223.5 L215.7 218.5 L218.6 213.4 L221.5 208.3 L224.5 203.1 L227.6 197.9 L230.8 192.7 L234.0 187.4 L237.3 182.1"/>
<path class="rt" d="M202.2 243.3 L204.4 238.4 L206.7 233.4 L209.1 228.3 L211.5 223.2 L213.9 218.1 L216.4 212.9 L219.0 207.7 L221.6 202.4 L224.3 197.1 L227.0 191.7 L229.9 186.3 L232.8 180.8"/>
<path class="rt" d="M202.2 243.3 L204.7 238.1 L207.2 232.8 L209.8 227.5 L212.5 222.1 L215.2 216.7 L218.0 211.2 L220.9 205.7 L223.8 200.2 L226.8 194.5 L229.9 188.9 L233.1 183.1 L236.3 177.4"/>
<path class="rt" d="M202.2 243.3 L204.6 238.3 L207.0 233.2 L209.4 228.0 L212.0 222.9 L214.5 217.6 L217.2 212.4 L219.9 207.1 L222.6 201.7 L225.5 196.3 L228.4 190.8 L231.3 185.3 L234.4 179.7"/>
<path class="rt" d="M202.2 243.3 L204.0 238.7 L205.8 234.1 L207.7 229.4 L209.6 224.7 L211.6 220.0 L213.6 215.2 L215.6 210.4 L217.7 205.5 L219.8 200.6 L222.0 195.6 L224.2 190.6 L226.5 185.6"/>
<path class="rt" d="M202.2 243.3 L203.8 238.7 L205.5 234.0 L207.3 229.3 L209.0 224.6 L210.8 219.8 L212.7 215.0 L214.6 210.1 L216.5 205.2 L218.4 200.2 L220.4 195.2 L222.5 190.1 L224.6 185.0"/>
<path class="rt" d="M202.2 243.3 L204.1 238.6 L206.1 233.8 L208.1 229.0 L210.1 224.1 L212.2 219.2 L214.3 214.3 L216.5 209.3 L218.7 204.3 L220.9 199.2 L223.3 194.1 L225.7 188.9 L228.1 183.7"/>
<path class="rt" d="M202.2 243.3 L200.1 236.9 L197.9 230.4 L195.7 223.8 L193.4 217.2 L191.0 210.4 L188.6 203.6 L186.0 196.7 L183.4 189.6 L180.8 182.5 L178.0 175.3 L175.1 167.9 L172.1 160.4"/>
<path class="rt" d="M202.2 243.3 L200.5 237.0 L198.8 230.6 L197.0 224.1 L195.2 217.6 L193.3 210.9 L191.4 204.2 L189.4 197.4 L187.4 190.4 L185.3 183.4 L183.1 176.2 L180.8 169.0 L178.4 161.6"/>
<path class="rt" d="M202.2 243.3 L201.2 237.1 L200.3 230.7 L199.3 224.3 L198.3 217.8 L197.3 211.2 L196.2 204.5 L195.1 197.7 L193.9 190.8 L192.8 183.8 L191.5 176.7 L190.3 169.4 L189.0 162.0"/>
<path class="rt" d="M202.2 243.3 L200.5 237.5 L198.8 231.6 L197.1 225.7 L195.3 219.6 L193.5 213.5 L191.6 207.4 L189.7 201.1 L187.7 194.8 L185.7 188.4 L183.5 181.8 L181.4 175.2 L179.1 168.5"/>
<path class="rt" d="M202.2 243.3 L200.5 237.4 L198.7 231.4 L197.0 225.4 L195.1 219.3 L193.3 213.1 L191.3 206.8 L189.3 200.5 L187.3 194.1 L185.2 187.5 L183.0 180.9 L180.8 174.2 L178.4 167.4"/>
<path class="rt" d="M202.2 243.3 L201.0 238.4 L199.7 233.4 L198.4 228.4 L197.1 223.3 L195.8 218.2 L194.4 213.0 L193.1 207.7 L191.6 202.4 L190.2 197.1 L188.7 191.7 L187.1 186.2 L185.6 180.6"/>
<path class="rt" d="M202.2 243.3 L201.5 238.7 L200.8 234.0 L200.0 229.3 L199.3 224.5 L198.5 219.7 L197.8 214.8 L197.0 209.9 L196.2 204.9 L195.3 199.9 L194.5 194.8 L193.6 189.6 L192.7 184.4"/>
<path class="rt" d="M202.2 243.3 L207.9 235.7 L213.9 228.1 L220.0 220.4 L226.3 212.6 L232.8 204.9 L239.6 197.0 L246.6 189.2 L253.9 181.3 L261.5 173.4 L269.5 165.5 L277.7 157.6 L286.3 149.7"/>
<path class="rt" d="M202.2 243.3 L210.7 233.9 L219.6 224.3 L228.8 214.8 L238.4 205.3 L248.5 195.7 L259.0 186.2 L270.0 176.8 L281.5 167.5 L293.7 158.3 L306.4 149.3 L319.8 140.6 L333.9 132.2"/>
<path class="rt" d="M202.2 243.3 L205.9 239.5 L209.6 235.6 L213.4 231.8 L217.3 227.9 L221.2 224.0 L225.2 220.2 L229.2 216.3 L233.3 212.5 L237.5 208.6 L241.8 204.8 L246.1 200.9 L250.5 197.1 L255.0 193.3 L259.6 189.5 L264.2 185.7 L269.0 181.9 L273.8 178.2 L278.7 174.5 L283.8 170.8 L288.9 167.2 L294.1 163.5 L299.4 160.0 L304.8 156.4 L310.4 152.9 L316.0 149.5 L321.8 146.1 L327.6 142.8 L333.6 139.6 L339.6 136.4 L345.8 133.3 L352.1 130.3 L358.5 127.4 L365.1 124.6 L371.7 121.9 L378.4 119.3 L385.2 116.8 L392.2 114.5 L399.2 112.3 L406.3 110.2 L413.5 108.2 L420.8 106.5 L428.2 104.8 L435.6 103.4 L443.1 102.1 L450.7 100.9 L458.3 100.0 L465.9 99.2 L473.6 98.6 L481.3 98.2 L489.1 98.0 L496.8 98.0 L504.5 98.2 L512.2 98.5 L519.9 99.0 L527.6 99.7 L535.2 100.6 L542.8 101.7 L550.3 102.9 L557.7 104.4 L565.1 105.9"/>
<path class="rt" d="M202.2 243.3 L205.9 239.5 L209.7 235.6 L213.5 231.8 L217.4 227.9 L221.3 224.1 L225.4 220.2 L229.4 216.4 L233.6 212.5 L237.8 208.7 L242.1 204.9 L246.5 201.0 L250.9 197.2 L255.5 193.4 L260.1 189.6 L264.8 185.9 L269.6 182.1 L274.4 178.4 L279.4 174.7 L284.5 171.1 L289.6 167.4 L294.9 163.8 L300.3 160.3 L305.7 156.8 L311.3 153.3 L317.0 149.9 L322.7 146.6 L328.6 143.3 L334.6 140.1 L340.8 137.0 L347.0 133.9 L353.3 131.0 L359.7 128.1 L366.3 125.4 L372.9 122.7 L379.7 120.2 L386.6 117.7 L393.5 115.5 L400.6 113.3 L407.7 111.3 L414.9 109.4 L422.2 107.7 L429.6 106.1 L437.1 104.7 L444.6 103.5 L452.1 102.4 L459.7 101.5 L467.4 100.8 L475.1 100.3 L482.8 99.9 L490.5 99.8 L498.2 99.8 L505.9 100.0 L513.6 100.4 L521.2 101.0 L528.9 101.8 L536.5 102.7 L544.0 103.8 L551.5 105.1 L558.9 106.6 L566.3 108.2"/>
<path class="rt" d="M202.2 243.3 L205.9 239.2 L209.7 235.0 L213.5 230.9 L217.5 226.7 L221.4 222.5 L225.5 218.3 L229.6 214.2 L233.8 210.0 L238.1 205.8 L242.5 201.6 L246.9 197.5 L251.4 193.3 L256.1 189.1 L260.8 185.0 L265.6 180.9 L270.5 176.8 L275.6 172.7 L280.7 168.6 L285.9 164.6 L291.3 160.6 L296.8 156.6 L302.4 152.6 L308.1 148.8 L313.9 144.9 L319.9 141.2 L326.0 137.4 L332.2 133.8 L338.6 130.2 L345.0 126.8 L351.7 123.4 L358.4 120.1 L365.3 116.9 L372.3 113.8 L379.5 110.9 L386.8 108.1 L394.2 105.4 L401.7 102.9 L409.3 100.6 L417.0 98.4 L424.9 96.4 L432.8 94.5 L440.9 92.9 L449.0 91.5 L457.1 90.3 L465.4 89.2 L473.6 88.4 L482.0 87.8 L490.3 87.5 L498.6 87.3 L507.0 87.4 L515.3 87.7 L523.7 88.2 L532.0 89.0 L540.2 89.9 L548.4 91.1 L556.5 92.5 L564.6 94.1 L572.5 95.8 L580.4 97.8 L588.2 99.9"/>
<path class="rt" d="M202.2 243.3 L206.2 239.1 L210.3 234.9 L214.4 230.6 L218.6 226.4 L222.9 222.2 L227.3 217.9 L231.7 213.7 L236.3 209.5 L240.9 205.2 L245.6 201.0 L250.4 196.8 L255.3 192.6 L260.3 188.5 L265.4 184.3 L270.6 180.2 L275.9 176.1 L281.3 172.0 L286.9 168.0 L292.5 164.0 L298.3 160.1 L304.2 156.2 L310.2 152.3 L316.4 148.5 L322.7 144.8 L329.1 141.2 L335.6 137.7 L342.3 134.2 L349.1 130.8 L356.1 127.6 L363.2 124.4 L370.4 121.4 L377.7 118.6 L385.2 115.8 L392.8 113.2 L400.5 110.8 L408.3 108.5 L416.3 106.4 L424.3 104.5 L432.4 102.8 L440.6 101.3 L448.9 100.0 L457.2 98.9 L465.6 98.0 L474.0 97.3 L482.4 96.9 L490.9 96.7 L499.4 96.7 L507.9 96.9 L516.3 97.4 L524.7 98.1 L533.1 99.0 L541.4 100.1 L549.7 101.4 L557.9 102.9 L566.0 104.7 L574.0 106.6 L581.9 108.7 L589.7 111.0 L597.4 113.4 L605.0 116.0"/>
<path class="rt" d="M202.2 243.3 L206.4 239.2 L210.7 235.2 L215.1 231.1 L219.6 227.0 L224.1 222.9 L228.7 218.8 L233.4 214.8 L238.2 210.7 L243.1 206.7 L248.0 202.7 L253.1 198.7 L258.2 194.7 L263.4 190.8 L268.8 186.9 L274.2 183.0 L279.8 179.2 L285.4 175.4 L291.2 171.7 L297.1 168.0 L303.1 164.3 L309.2 160.8 L315.4 157.3 L321.7 153.8 L328.2 150.5 L334.8 147.2 L341.5 144.0 L348.3 141.0 L355.3 138.0 L362.3 135.2 L369.5 132.5 L376.8 129.9 L384.2 127.5 L391.7 125.2 L399.2 123.0 L406.9 121.0 L414.7 119.2 L422.6 117.6 L430.5 116.1 L438.5 114.9 L446.6 113.8 L454.7 112.9 L462.8 112.2 L471.0 111.8 L479.2 111.5 L487.3 111.4 L495.5 111.5 L503.7 111.9 L511.9 112.4 L520.0 113.1 L528.1 114.1 L536.1 115.2 L544.1 116.5 L552.0 118.0 L559.9 119.7 L567.6 121.6 L575.3 123.6 L582.9 125.8 L590.3 128.1 L597.7 130.6 L604.9 133.2"/>
<text x="35.7" y="135.7" font-size="3.15" fill="#101010" text-anchor="middle" letter-spacing=".8" stroke="#101010" stroke-width=".1">WASHINGTON</text>
<text x="82.5" y="135.3" font-size="3.15" fill="#101010" text-anchor="middle" letter-spacing=".8" stroke="#101010" stroke-width=".1">MONTANA</text>
<text x="122.6" y="133.7" font-size="3.15" fill="#101010" text-anchor="middle" letter-spacing=".8" stroke="#101010" stroke-width=".1">NORTH DAKOTA</text>
<text x="149.0" y="144.3" font-size="3.15" fill="#101010" text-anchor="middle" letter-spacing=".8" stroke="#101010" stroke-width=".1">MINNESOTA</text>
<text x="33.2" y="156.7" font-size="3.15" fill="#101010" text-anchor="middle" letter-spacing=".8" stroke="#101010" stroke-width=".1">OREGON</text>
<text x="62.7" y="158.8" font-size="3.15" fill="#101010" text-anchor="middle" letter-spacing=".8" stroke="#101010" stroke-width=".1">IDAHO</text>
<text x="91.2" y="161.7" font-size="3.15" fill="#101010" text-anchor="middle" letter-spacing=".8" stroke="#101010" stroke-width=".1">WYOMING</text>
<text x="123.4" y="152.6" font-size="3.15" fill="#101010" text-anchor="middle" letter-spacing=".8" stroke="#101010" stroke-width=".1">SOUTH DAKOTA</text>
<text x="166.6" y="154.0" font-size="3.15" fill="#101010" text-anchor="middle" letter-spacing=".8" stroke="#101010" stroke-width=".1">WISCONSIN</text>
<text x="126.1" y="170.0" font-size="3.15" fill="#101010" text-anchor="middle" letter-spacing=".8" stroke="#101010" stroke-width=".1">NEBRASKA</text>
<text x="154.6" y="169.0" font-size="3.15" fill="#101010" text-anchor="middle" letter-spacing=".8" stroke="#101010" stroke-width=".1">IOWA</text>
<text x="169.7" y="180.0" font-size="3.15" fill="#101010" text-anchor="middle" letter-spacing=".8" stroke="#101010" stroke-width=".1">ILLINOIS</text>
<text x="50.7" y="183.5" font-size="3.15" fill="#101010" text-anchor="middle" letter-spacing=".8" stroke="#101010" stroke-width=".1">NEVADA</text>
<text x="73.1" y="183.7" font-size="3.15" fill="#101010" text-anchor="middle" letter-spacing=".8" stroke="#101010" stroke-width=".1">UTAH</text>
<text x="156.2" y="187.3" font-size="3.15" fill="#101010" text-anchor="middle" letter-spacing=".8" stroke="#101010" stroke-width=".1">MISSOURI</text>
<text x="41.9" y="199.1" font-size="3.15" fill="#101010" text-anchor="middle" letter-spacing=".8" stroke="#101010" stroke-width=".1">CALIFORNIA</text>
<text x="73.1" y="211.2" font-size="3.15" fill="#101010" text-anchor="middle" letter-spacing=".8" stroke="#101010" stroke-width=".1">ARIZONA</text>
<text x="98.7" y="210.5" font-size="3.15" fill="#101010" text-anchor="middle" letter-spacing=".8" stroke="#101010" stroke-width=".1">NEW MEXICO</text>
<text x="137.1" y="208.5" font-size="3.15" fill="#101010" text-anchor="middle" letter-spacing=".8" stroke="#101010" stroke-width=".1">OKLAHOMA</text>
<text x="127.4" y="225.4" font-size="3.15" fill="#101010" text-anchor="middle" letter-spacing=".8" stroke="#101010" stroke-width=".1">TEXAS</text>
<text x="163.8" y="229.9" font-size="3.15" fill="#101010" text-anchor="middle" letter-spacing=".8" stroke="#101010" stroke-width=".1">LOUISIANA</text>
<text x="190.8" y="194.2" font-size="3.15" fill="#101010" text-anchor="middle" letter-spacing=".8" stroke="#101010" stroke-width=".1">KENTUCKY</text>
<text x="181.4" y="204.0" font-size="3.15" fill="#101010" text-anchor="middle" letter-spacing=".8" stroke="#101010" stroke-width=".1">TENNESSEE</text>
<text x="214.7" y="196.3" font-size="3.15" fill="#101010" text-anchor="middle" letter-spacing=".8" stroke="#101010" stroke-width=".1">VIRGINIA</text>
<text x="214.7" y="202.5" font-size="3.15" fill="#101010" text-anchor="middle" letter-spacing=".8" stroke="#101010" stroke-width=".1">NORTH CAROLINA</text>
<text x="212.6" y="214.9" font-size="3.15" fill="#101010" text-anchor="middle" letter-spacing=".8" stroke="#101010" stroke-width=".1">SOUTH CAROLINA</text>
<text x="193.9" y="222.2" font-size="3.15" fill="#101010" text-anchor="middle" letter-spacing=".8" stroke="#101010" stroke-width=".1">GEORGIA</text>
<text x="177.3" y="219.1" font-size="3.15" fill="#101010" text-anchor="middle" letter-spacing=".8" stroke="#101010" stroke-width=".1">ALABAMA</text>
<text x="200.1" y="178.6" font-size="3.15" fill="#101010" text-anchor="middle" letter-spacing=".8" stroke="#101010" stroke-width=".1">OHIO</text>
<text x="220.9" y="183.2" font-size="3.15" fill="#101010" text-anchor="middle" letter-spacing=".8" stroke="#101010" stroke-width=".1">MARYLAND</text>
<text x="261.4" y="145.9" font-size="3.15" fill="#101010" text-anchor="middle" letter-spacing=".8" stroke="#101010" stroke-width=".1">MAINE</text>
<text x="243.8" y="153.0" font-size="3.15" fill="#101010" text-anchor="middle" letter-spacing=".8" stroke="#101010" stroke-width=".1">VERMONT</text>
<text x="250.0" y="159.9" font-size="3.15" fill="#101010" text-anchor="middle" letter-spacing=".8" stroke="#101010" stroke-width=".1">NEW HAMPSHIRE</text>
<text x="252.0" y="166.5" font-size="3.15" fill="#101010" text-anchor="middle" letter-spacing=".8" stroke="#101010" stroke-width=".1">MASSACHUSETTS</text>
<text x="123.0" y="178.8" font-size="5.62" fill="#0c0c0c" text-anchor="middle" letter-spacing="0.15" font-weight="bold">United States</text>
<text x="123.6" y="184.4" font-size="5.62" fill="#0c0c0c" text-anchor="middle" letter-spacing="0.15" font-weight="bold">of America</text>
<text x="181.3" y="73.1" font-size="4.24" fill="#161616" text-anchor="middle" letter-spacing="0.20">Fort Severn</text>
<text x="125.1" y="272.5" font-size="5.30" fill="#141414" text-anchor="middle" letter-spacing="0.50" font-weight="bold">Mexico</text>
<text x="125.6" y="283.5" font-size="3.82" fill="#1c1c1c" text-anchor="middle" letter-spacing="0.10">Mexico City</text>
<text x="169.7" y="304.1" font-size="4.66" fill="#141414" text-anchor="middle" letter-spacing="0.30" font-weight="bold">Guatemala</text>
<text x="193.1" y="306.7" font-size="3.92" fill="#161616" text-anchor="middle" letter-spacing="0.20">Honduras</text>
<text x="191.8" y="318.6" font-size="3.92" fill="#161616" text-anchor="middle" letter-spacing="0.20">Nicaragua</text>
<text x="195.7" y="328.2" font-size="3.92" fill="#161616" text-anchor="middle" letter-spacing="0.20">Costa Rica</text>
<text x="204.8" y="337.8" font-size="4.56" fill="#141414" text-anchor="middle" letter-spacing="0.30" font-weight="bold">Panama</text>
<text x="241.2" y="362.0" font-size="5.30" fill="#141414" text-anchor="middle" letter-spacing="0.40" font-weight="bold">Colombia</text>
<text x="274.9" y="339.1" font-size="4.88" fill="#141414" text-anchor="middle" letter-spacing="0.25" font-weight="bold">Venezuela</text>
<text x="239.0" y="350.1" font-size="3.60" fill="#1c1c1c" text-anchor="middle" letter-spacing="0.10">Bogota</text>
<text x="228.2" y="292.3" font-size="3.60" fill="#1a1a1a" text-anchor="middle" letter-spacing="0.10">Jamaica</text>
<text x="252.8" y="285.1" font-size="3.60" fill="#1a1a1a" text-anchor="middle" letter-spacing="0.10">Dominican</text>
<text x="252.8" y="290.3" font-size="3.60" fill="#1a1a1a" text-anchor="middle" letter-spacing="0.10">Republic</text>
<text x="212.0" y="270.0" font-size="3.60" fill="#1a1a1a" text-anchor="middle" letter-spacing="0.10">Havana</text>
<text x="215.6" y="379.9" font-size="4.56" fill="#161616" text-anchor="middle" letter-spacing="0.20">Ecuador</text>
<text x="234.5" y="404.9" font-size="4.88" fill="#141414" text-anchor="middle" letter-spacing="0.30" font-weight="bold">Peru</text>
<text x="307.5" y="352.7" font-size="4.56" fill="#141414" text-anchor="middle" letter-spacing="0.20" font-weight="bold">Guyana</text>
<text x="331.8" y="420.9" font-size="5.09" fill="#141414" text-anchor="middle" letter-spacing="0.30" font-weight="bold">Brazil</text>
<text x="275.2" y="420.1" font-size="3.60" fill="#1c1c1c" text-anchor="middle" letter-spacing="0.10">Riberalta</text>
<text x="300.0" y="427.7" font-size="3.60" fill="#1c1c1c" text-anchor="middle" letter-spacing="0.10">Vilhena</text>
<text x="279.0" y="449.4" font-size="4.56" fill="#141414" text-anchor="middle" letter-spacing="0.20" font-weight="bold">Bolivia</text>
<text x="336.8" y="349.1" font-size="3.60" fill="#1c1c1c" text-anchor="middle" letter-spacing="0.10">Cayenne</text>
<text x="534.5" y="228.2" font-size="4.56" fill="#141414" text-anchor="middle" letter-spacing="0.20" font-weight="bold">Morocco</text>
<text x="610.0" y="214.3" font-size="4.24" fill="#141414" text-anchor="middle" letter-spacing="0.20" font-weight="bold">Tunisia</text>
<text x="580.2" y="245.3" font-size="4.56" fill="#141414" text-anchor="middle" letter-spacing="0.20" font-weight="bold">Algeria</text>
<text x="591.7" y="267.7" font-size="3.82" fill="#1c1c1c" text-anchor="middle" letter-spacing="0.15">Tamanrasset</text>
<text x="525.6" y="282.6" font-size="4.56" fill="#141414" text-anchor="middle" letter-spacing="0.20" font-weight="bold">Mauritania</text>
<text x="608.5" y="294.9" font-size="4.56" fill="#141414" text-anchor="middle" letter-spacing="0.20" font-weight="bold">Niger</text>
<text x="556.9" y="300.4" font-size="4.56" fill="#141414" text-anchor="middle" letter-spacing="0.20" font-weight="bold">Mali</text>
<text x="503.2" y="309.8" font-size="4.24" fill="#141414" text-anchor="middle" letter-spacing="0.20" font-weight="bold">Senegal</text>
<text x="559.4" y="320.1" font-size="4.24" fill="#141414" text-anchor="middle" letter-spacing="0.15" font-weight="bold">Burkina Faso</text>
<text x="520.6" y="326.1" font-size="4.24" fill="#141414" text-anchor="middle" letter-spacing="0.20" font-weight="bold">Guinea</text>
<text x="602.6" y="331.3" font-size="4.88" fill="#141414" text-anchor="middle" letter-spacing="0.20" font-weight="bold">Nigeria</text>
<text x="577.7" y="331.9" font-size="3.60" fill="#161616" text-anchor="middle" letter-spacing="0.10">Benin</text>
<text x="515.6" y="335.9" font-size="4.03" fill="#141414" text-anchor="middle" letter-spacing="0.10" font-weight="bold">Sierra Leone</text>
<text x="543.0" y="338.4" font-size="4.24" fill="#141414" text-anchor="middle" letter-spacing="0.10" font-weight="bold">Ivory Coast</text>
<text x="562.8" y="338.4" font-size="4.24" fill="#141414" text-anchor="middle" letter-spacing="0.10" font-weight="bold">Ghana</text>
<text x="525.6" y="348.4" font-size="4.24" fill="#141414" text-anchor="middle" letter-spacing="0.15" font-weight="bold">Liberia</text>
<text x="620.0" y="353.3" font-size="4.24" fill="#141414" text-anchor="middle" letter-spacing="0.15" font-weight="bold">Cameroon</text>
<text x="503.0" y="302.7" font-size="3.50" fill="#1c1c1c" text-anchor="middle" letter-spacing="0.10">Dakar</text>
<text x="607.5" y="36.1" font-size="4.88" fill="#141414" text-anchor="middle" letter-spacing="0.20" font-weight="bold">Norway</text>
<text x="552.2" y="80.6" font-size="5.09" fill="#141414" text-anchor="middle" letter-spacing="0.20" font-weight="bold">United</text>
<text x="552.2" y="87.7" font-size="5.09" fill="#141414" text-anchor="middle" letter-spacing="0.20" font-weight="bold">Kingdom</text>
<text x="531.4" y="97.9" font-size="4.56" fill="#141414" text-anchor="middle" letter-spacing="0.20">Ireland</text>
<text x="593.8" y="98.1" font-size="3.82" fill="#141414" text-anchor="middle" letter-spacing="0.10">The</text>
<text x="593.8" y="102.3" font-size="3.82" fill="#141414" text-anchor="middle" letter-spacing="0.10">Netherlands</text>
<text x="563.0" y="103.7" font-size="3.50" fill="#1c1c1c" text-anchor="middle" letter-spacing="0.10">London</text>
<text x="587.5" y="113.7" font-size="4.56" fill="#141414" text-anchor="middle" letter-spacing="0.20" font-weight="bold">Belgium</text>
<text x="613.7" y="111.0" font-size="5.30" fill="#141414" text-anchor="middle" letter-spacing="0.25" font-weight="bold">Germany</text>
<text x="578.0" y="122.5" font-size="3.82" fill="#1c1c1c" text-anchor="middle" letter-spacing="0.10">Paris</text>
<text x="575.1" y="141.0" font-size="5.51" fill="#141414" text-anchor="middle" letter-spacing="0.30" font-weight="bold">France</text>
<text x="604.2" y="139.5" font-size="4.56" fill="#141414" text-anchor="middle" letter-spacing="0.15" font-weight="bold">Switzerland</text>
<text x="573.0" y="165.3" font-size="3.60" fill="#1c1c1c" text-anchor="middle" letter-spacing="0.10">Andorra</text>
<text x="532.3" y="180.5" font-size="4.88" fill="#141414" text-anchor="middle" letter-spacing="0.20" font-weight="bold">Portugal</text>
<text x="622.9" y="164.9" font-size="4.88" fill="#141414" text-anchor="middle" letter-spacing="0.20" font-weight="bold">Italy</text>
<text x="625.0" y="111.2" font-size="3.82" fill="#141414" text-anchor="middle" letter-spacing="0.10">Austria</text>
<circle cx="202.2" cy="243.3" r="8.6" fill="#ffffff" fill-opacity=".12"/>
<circle cx="63.0" cy="108.3" r="2.4" fill="#efc60f" stroke="#1e1e1e" stroke-opacity=".35" stroke-width=".4"/>
<circle cx="26.3" cy="133.3" r="2.4" fill="#ec674f" stroke="#1e1e1e" stroke-opacity=".35" stroke-width=".4"/>
<circle cx="25.0" cy="145.3" r="2.4" fill="#ec674f" stroke="#1e1e1e" stroke-opacity=".35" stroke-width=".4"/>
<circle cx="72.0" cy="174.4" r="2.4" fill="#ec674f" stroke="#1e1e1e" stroke-opacity=".35" stroke-width=".4"/>
<circle cx="104.3" cy="179.8" r="2.4" fill="#12882f" stroke="#1e1e1e" stroke-opacity=".35" stroke-width=".4"/>
<circle cx="143.1" cy="171.4" r="2.4" fill="#ec674f" stroke="#1e1e1e" stroke-opacity=".35" stroke-width=".4"/>
<circle cx="148.3" cy="183.0" r="2.4" fill="#a4c317" stroke="#1e1e1e" stroke-opacity=".35" stroke-width=".4"/>
<circle cx="154.9" cy="149.7" r="2.4" fill="#efc60f" stroke="#1e1e1e" stroke-opacity=".35" stroke-width=".4"/>
<circle cx="26.0" cy="192.5" r="2.4" fill="#ec674f" stroke="#1e1e1e" stroke-opacity=".35" stroke-width=".4"/>
<circle cx="57.9" cy="201.0" r="2.4" fill="#efc60f" stroke="#1e1e1e" stroke-opacity=".35" stroke-width=".4"/>
<circle cx="43.5" cy="212.6" r="2.4" fill="#efc60f" stroke="#1e1e1e" stroke-opacity=".35" stroke-width=".4"/>
<circle cx="48.9" cy="219.0" r="2.4" fill="#efc60f" stroke="#1e1e1e" stroke-opacity=".35" stroke-width=".4"/>
<circle cx="71.8" cy="215.3" r="2.4" fill="#ee9a5b" stroke="#1e1e1e" stroke-opacity=".35" stroke-width=".4"/>
<circle cx="150.1" cy="199.9" r="2.4" fill="#ee9a5b" stroke="#1e1e1e" stroke-opacity=".35" stroke-width=".4"/>
<circle cx="139.5" cy="218.9" r="2.4" fill="#ee9a5b" stroke="#1e1e1e" stroke-opacity=".35" stroke-width=".4"/>
<circle cx="138.0" cy="218.1" r="2.4" fill="#12882f" stroke="#1e1e1e" stroke-opacity=".35" stroke-width=".4"/>
<circle cx="135.2" cy="232.1" r="2.4" fill="#efc60f" stroke="#1e1e1e" stroke-opacity=".35" stroke-width=".4"/>
<circle cx="131.7" cy="235.5" r="2.4" fill="#ee9a5b" stroke="#1e1e1e" stroke-opacity=".35" stroke-width=".4"/>
<circle cx="145.5" cy="233.2" r="2.4" fill="#12882f" stroke="#1e1e1e" stroke-opacity=".35" stroke-width=".4"/>
<circle cx="145.8" cy="234.9" r="2.4" fill="#efc60f" stroke="#1e1e1e" stroke-opacity=".35" stroke-width=".4"/>
<circle cx="188.0" cy="189.4" r="2.4" fill="#ee9a5b" stroke="#1e1e1e" stroke-opacity=".35" stroke-width=".4"/>
<circle cx="167.5" cy="186.1" r="2.4" fill="#a4c317" stroke="#1e1e1e" stroke-opacity=".35" stroke-width=".4"/>
<circle cx="206.3" cy="188.3" r="2.4" fill="#a4c317" stroke="#1e1e1e" stroke-opacity=".35" stroke-width=".4"/>
<circle cx="225.2" cy="193.2" r="2.4" fill="#a4c317" stroke="#1e1e1e" stroke-opacity=".35" stroke-width=".4"/>
<circle cx="230.2" cy="196.6" r="2.4" fill="#a4c317" stroke="#1e1e1e" stroke-opacity=".35" stroke-width=".4"/>
<circle cx="183.8" cy="200.8" r="2.4" fill="#a4c317" stroke="#1e1e1e" stroke-opacity=".35" stroke-width=".4"/>
<circle cx="195.7" cy="202.5" r="2.1" fill="#9c9c9c" stroke="#1e1e1e" stroke-opacity=".35" stroke-width=".4"/>
<circle cx="169.2" cy="206.7" r="2.4" fill="#a4c317" stroke="#1e1e1e" stroke-opacity=".35" stroke-width=".4"/>
<circle cx="183.4" cy="208.8" r="2.4" fill="#a4c317" stroke="#1e1e1e" stroke-opacity=".35" stroke-width=".4"/>
<circle cx="183.5" cy="214.6" r="2.4" fill="#efc60f" stroke="#1e1e1e" stroke-opacity=".35" stroke-width=".4"/>
<circle cx="193.8" cy="214.2" r="2.4" fill="#12882f" stroke="#1e1e1e" stroke-opacity=".35" stroke-width=".4"/>
<circle cx="203.6" cy="207.4" r="2.4" fill="#a4c317" stroke="#1e1e1e" stroke-opacity=".35" stroke-width=".4"/>
<circle cx="209.2" cy="205.7" r="2.4" fill="#12882f" stroke="#1e1e1e" stroke-opacity=".35" stroke-width=".4"/>
<circle cx="218.7" cy="202.1" r="2.4" fill="#12882f" stroke="#1e1e1e" stroke-opacity=".35" stroke-width=".4"/>
<circle cx="222.7" cy="210.8" r="2.4" fill="#12882f" stroke="#1e1e1e" stroke-opacity=".35" stroke-width=".4"/>
<circle cx="218.1" cy="213.9" r="2.4" fill="#a4c317" stroke="#1e1e1e" stroke-opacity=".35" stroke-width=".4"/>
<circle cx="213.2" cy="218.1" r="2.4" fill="#a4c317" stroke="#1e1e1e" stroke-opacity=".35" stroke-width=".4"/>
<circle cx="168.0" cy="233.2" r="2.4" fill="#a4c317" stroke="#1e1e1e" stroke-opacity=".35" stroke-width=".4"/>
<circle cx="173.3" cy="231.0" r="2.4" fill="#ee9a5b" stroke="#1e1e1e" stroke-opacity=".35" stroke-width=".4"/>
<circle cx="181.6" cy="230.7" r="2.4" fill="#a4c317" stroke="#1e1e1e" stroke-opacity=".35" stroke-width=".4"/>
<circle cx="212.7" cy="252.8" r="2.4" fill="#12882f" stroke="#1e1e1e" stroke-opacity=".35" stroke-width=".4"/>
<circle cx="212.1" cy="254.2" r="2.4" fill="#ec674f" stroke="#1e1e1e" stroke-opacity=".35" stroke-width=".4"/>
<circle cx="205.6" cy="260.2" r="2.4" fill="#a4c317" stroke="#1e1e1e" stroke-opacity=".35" stroke-width=".4"/>
<circle cx="202.7" cy="267.8" r="2.1" fill="#9c9c9c" stroke="#1e1e1e" stroke-opacity=".35" stroke-width=".4"/>
<circle cx="182.9" cy="277.1" r="2.4" fill="#ee9a5b" stroke="#1e1e1e" stroke-opacity=".35" stroke-width=".4"/>
<circle cx="129.0" cy="284.6" r="2.4" fill="#ec674f" stroke="#1e1e1e" stroke-opacity=".35" stroke-width=".4"/>
<circle cx="207.4" cy="285.3" r="2.4" fill="#ec674f" stroke="#1e1e1e" stroke-opacity=".35" stroke-width=".4"/>
<circle cx="222.6" cy="289.0" r="2.1" fill="#9c9c9c" stroke="#1e1e1e" stroke-opacity=".35" stroke-width=".4"/>
<circle cx="259.0" cy="289.3" r="2.4" fill="#ee9a5b" stroke="#1e1e1e" stroke-opacity=".35" stroke-width=".4"/>
<circle cx="264.8" cy="288.7" r="2.4" fill="#ec674f" stroke="#1e1e1e" stroke-opacity=".35" stroke-width=".4"/>
<circle cx="275.3" cy="289.3" r="2.4" fill="#efc60f" stroke="#1e1e1e" stroke-opacity=".35" stroke-width=".4"/>
<circle cx="216.1" cy="332.0" r="2.4" fill="#ec674f" stroke="#1e1e1e" stroke-opacity=".35" stroke-width=".4"/>
<circle cx="239.2" cy="351.5" r="2.4" fill="#ee9a5b" stroke="#1e1e1e" stroke-opacity=".35" stroke-width=".4"/>
<circle cx="232.5" cy="147.0" r="2.4" fill="#efc60f" stroke="#1e1e1e" stroke-opacity=".35" stroke-width=".4"/>
<circle cx="241.0" cy="146.0" r="2.4" fill="#ec674f" stroke="#1e1e1e" stroke-opacity=".35" stroke-width=".4"/>
<circle cx="262.8" cy="150.2" r="2.4" fill="#efc60f" stroke="#1e1e1e" stroke-opacity=".35" stroke-width=".4"/>
<circle cx="243.7" cy="152.3" r="2.4" fill="#ee9a5b" stroke="#1e1e1e" stroke-opacity=".35" stroke-width=".4"/>
<circle cx="256.2" cy="157.3" r="2.4" fill="#efc60f" stroke="#1e1e1e" stroke-opacity=".35" stroke-width=".4"/>
<circle cx="251.2" cy="161.7" r="2.4" fill="#ec674f" stroke="#1e1e1e" stroke-opacity=".35" stroke-width=".4"/>
<circle cx="253.2" cy="165.1" r="2.4" fill="#a4c317" stroke="#1e1e1e" stroke-opacity=".35" stroke-width=".4"/>
<circle cx="251.3" cy="168.9" r="2.4" fill="#a4c317" stroke="#1e1e1e" stroke-opacity=".35" stroke-width=".4"/>
<circle cx="240.8" cy="162.8" r="2.4" fill="#ee9a5b" stroke="#1e1e1e" stroke-opacity=".35" stroke-width=".4"/>
<circle cx="230.6" cy="160.6" r="2.4" fill="#a4c317" stroke="#1e1e1e" stroke-opacity=".35" stroke-width=".4"/>
<circle cx="223.7" cy="160.5" r="2.4" fill="#a4c317" stroke="#1e1e1e" stroke-opacity=".35" stroke-width=".4"/>
<circle cx="219.0" cy="161.6" r="2.4" fill="#a4c317" stroke="#1e1e1e" stroke-opacity=".35" stroke-width=".4"/>
<circle cx="215.0" cy="157.1" r="2.4" fill="#a4c317" stroke="#1e1e1e" stroke-opacity=".35" stroke-width=".4"/>
<circle cx="198.6" cy="166.0" r="2.4" fill="#12882f" stroke="#1e1e1e" stroke-opacity=".35" stroke-width=".4"/>
<circle cx="212.6" cy="166.8" r="2.4" fill="#efc60f" stroke="#1e1e1e" stroke-opacity=".35" stroke-width=".4"/>
<circle cx="207.0" cy="173.6" r="2.4" fill="#a4c317" stroke="#1e1e1e" stroke-opacity=".35" stroke-width=".4"/>
<circle cx="205.2" cy="170.8" r="2.4" fill="#12882f" stroke="#1e1e1e" stroke-opacity=".35" stroke-width=".4"/>
<circle cx="212.4" cy="176.1" r="2.4" fill="#a4c317" stroke="#1e1e1e" stroke-opacity=".35" stroke-width=".4"/>
<circle cx="200.6" cy="179.0" r="2.4" fill="#ee9a5b" stroke="#1e1e1e" stroke-opacity=".35" stroke-width=".4"/>
<circle cx="232.3" cy="171.2" r="2.4" fill="#a4c317" stroke="#1e1e1e" stroke-opacity=".35" stroke-width=".4"/>
<circle cx="245.7" cy="167.6" r="2.4" fill="#12882f" stroke="#1e1e1e" stroke-opacity=".35" stroke-width=".4"/>
<circle cx="242.1" cy="172.6" r="2.4" fill="#efc60f" stroke="#1e1e1e" stroke-opacity=".35" stroke-width=".4"/>
<circle cx="237.7" cy="175.0" r="2.4" fill="#efc60f" stroke="#1e1e1e" stroke-opacity=".35" stroke-width=".4"/>
<circle cx="244.8" cy="171.6" r="2.4" fill="#12882f" stroke="#1e1e1e" stroke-opacity=".35" stroke-width=".4"/>
<circle cx="243.9" cy="174.4" r="2.4" fill="#12882f" stroke="#1e1e1e" stroke-opacity=".35" stroke-width=".4"/>
<circle cx="240.9" cy="175.3" r="2.4" fill="#12882f" stroke="#1e1e1e" stroke-opacity=".35" stroke-width=".4"/>
<circle cx="237.3" cy="182.1" r="2.4" fill="#efc60f" stroke="#1e1e1e" stroke-opacity=".35" stroke-width=".4"/>
<circle cx="232.8" cy="180.8" r="2.4" fill="#ee9a5b" stroke="#1e1e1e" stroke-opacity=".35" stroke-width=".4"/>
<circle cx="236.3" cy="177.4" r="2.4" fill="#12882f" stroke="#1e1e1e" stroke-opacity=".35" stroke-width=".4"/>
<circle cx="234.4" cy="179.7" r="2.4" fill="#12882f" stroke="#1e1e1e" stroke-opacity=".35" stroke-width=".4"/>
<circle cx="226.5" cy="185.6" r="2.4" fill="#efc60f" stroke="#1e1e1e" stroke-opacity=".35" stroke-width=".4"/>
<circle cx="224.6" cy="185.0" r="2.4" fill="#12882f" stroke="#1e1e1e" stroke-opacity=".35" stroke-width=".4"/>
<circle cx="228.1" cy="183.7" r="2.4" fill="#12882f" stroke="#1e1e1e" stroke-opacity=".35" stroke-width=".4"/>
<circle cx="172.1" cy="160.4" r="2.4" fill="#efc60f" stroke="#1e1e1e" stroke-opacity=".35" stroke-width=".4"/>
<circle cx="178.4" cy="161.6" r="2.4" fill="#ee9a5b" stroke="#1e1e1e" stroke-opacity=".35" stroke-width=".4"/>
<circle cx="189.0" cy="162.0" r="2.4" fill="#ec674f" stroke="#1e1e1e" stroke-opacity=".35" stroke-width=".4"/>
<circle cx="179.1" cy="168.5" r="2.4" fill="#efc60f" stroke="#1e1e1e" stroke-opacity=".35" stroke-width=".4"/>
<circle cx="178.4" cy="167.4" r="2.4" fill="#12882f" stroke="#1e1e1e" stroke-opacity=".35" stroke-width=".4"/>
<circle cx="185.6" cy="180.6" r="2.4" fill="#ee9a5b" stroke="#1e1e1e" stroke-opacity=".35" stroke-width=".4"/>
<circle cx="192.7" cy="184.4" r="2.4" fill="#12882f" stroke="#1e1e1e" stroke-opacity=".35" stroke-width=".4"/>
<circle cx="286.3" cy="149.7" r="2.4" fill="#ec674f" stroke="#1e1e1e" stroke-opacity=".35" stroke-width=".4"/>
<circle cx="333.9" cy="132.2" r="2.1" fill="#9c9c9c" stroke="#1e1e1e" stroke-opacity=".35" stroke-width=".4"/>
<circle cx="565.1" cy="105.9" r="2.4" fill="#ec674f" stroke="#1e1e1e" stroke-opacity=".35" stroke-width=".4"/>
<circle cx="566.3" cy="108.2" r="2.4" fill="#ec674f" stroke="#1e1e1e" stroke-opacity=".35" stroke-width=".4"/>
<circle cx="588.2" cy="99.9" r="2.4" fill="#ec674f" stroke="#1e1e1e" stroke-opacity=".35" stroke-width=".4"/>
<circle cx="605.0" cy="116.0" r="2.4" fill="#ec674f" stroke="#1e1e1e" stroke-opacity=".35" stroke-width=".4"/>
<circle cx="604.9" cy="133.2" r="2.4" fill="#ec674f" stroke="#1e1e1e" stroke-opacity=".35" stroke-width=".4"/>
<circle cx="202.2" cy="243.3" r="3.0" fill="#1a7cf5" stroke="#ffffff" stroke-width="1"/>
</svg></div>
<!-- map overlays -->
<svg class="a" style="left:0;top:0" width="770" height="497" viewBox="0 0 770 497">
<rect x="146.5" y="51.8" width="95.1" height="15.3" rx="2.6" fill="#fff"/>
<rect x="150.3" y="55.2" width="8.6" height="8.4" rx="1.7" fill="#fff" stroke="#d6d6d6" stroke-width=".6"/>
<text x="163" y="61.6" font-size="5.45" fill="#30323e">Show indirect destinations</text>
<rect x="146.5" y="70.6" width="37.4" height="33.8" rx="2.6" fill="#fff"/>
<clipPath id="th"><rect x="0" y="0" width="34.2" height="23.9" rx="1.2"/></clipPath>
<g clip-path="url(#th)" transform="translate(148.1,71.9)">
<rect width="34.2" height="24" fill="#eef0f1"/>
<path d="M0 0 H14 L17 3 L15 6 L11 9 L9 13 L7 17 L5 20 L3 24 H0 Z" fill="#b9e0f5"/>
<path d="M14 0 H22 L19 3 L16 2 Z M26 8 L30 10 L28 12 Z M23 19 L27 20 L25 22 Z" fill="#cfe9f7"/>
<path d="M10 17 L19 7 L21 8 L12 18 Z" fill="#e8b8c8" fill-opacity=".8"/>
<g fill="#1273f0">
<circle cx="21.7" cy="1.3" r="1.3"/><circle cx="24.2" cy="3.4" r="1.1"/><circle cx="25.3" cy="5.3" r="1"/><circle cx="19.1" cy="4.8" r="1.1"/><circle cx="21.7" cy="5.9" r="1.2"/>
<circle cx="11.5" cy="4.2" r="1.1"/><circle cx="10.4" cy="6.5" r="1"/><circle cx="12.9" cy="7.2" r="1"/><circle cx="21.1" cy="9.3" r="2.1"/><circle cx="22.8" cy="8.1" r="1.4"/>
<circle cx="18.3" cy="12.1" r="1.6"/><circle cx="16" cy="13.2" r="1.4"/><circle cx="9.3" cy="15.5" r="1.8"/><circle cx="12.1" cy="16.6" r="1.3"/><circle cx="25" cy="13.2" r="1.4"/>
<circle cx="26.7" cy="14.9" r="1.3"/><circle cx="22.8" cy="16" r="1.5"/><circle cx="20" cy="17.7" r="1.3"/><circle cx="25" cy="17.7" r="1.2"/><circle cx="28.4" cy="18.8" r="1.1"/>
<circle cx="29.5" cy="20.3" r="1"/><circle cx="9.5" cy="20.5" r="1.1"/><circle cx="6.5" cy="22.2" r="1.1"/><circle cx="5.3" cy="22.8" r="1.1"/><circle cx="13.8" cy="14.9" r="1.2"/>
<circle cx="14.9" cy="13.8" r="1.1"/><circle cx="19.5" cy="10.5" r="1.3"/><circle cx="23.5" cy="11.5" r="1"/><circle cx="17" cy="10" r="1"/>
</g>
<g fill="#f3b234"><circle cx="23.9" cy="11" r=".9"/><circle cx="26.2" cy="11.2" r=".8"/><circle cx="11.5" cy="18.8" r=".9"/><circle cx="13.2" cy="14.3" r=".7"/><circle cx="20.5" cy="12.6" r=".8"/></g>
</g>
<text x="165.2" y="101.6" font-size="4.65" fill="#30323e" text-anchor="middle">Default view</text>
<rect x="187.9" y="70.9" width="53.4" height="13.5" rx="2.6" fill="#505050"/>
<rect x="188.1" y="71.7" width="26.4" height="11.8" rx="2.1" fill="#fdbb00"/>
<path d="M198.4 77.3 H203.6" stroke="#fff" stroke-width="1.1"/><path d="M202.6 76 L204.4 77.3 L202.6 78.6 Z" fill="#fff"/>
<path d="M224.6 76.1 H230.2 M230.2 78.9 H224.6" stroke="#eee" stroke-width="1"/><path d="M229 74.9 L230.8 76.1 L229 77.3 Z M225.8 77.7 L224 78.9 L225.8 80.1 Z" fill="#eee"/>
<!-- tooltip -->
<rect x="350.9" y="285.9" width="46" height="10.2" rx="1.8" fill="#1582f7"/>
<path d="M386.3 285.9 H395.1 A1.8 1.8 0 0 1 396.9 287.7 V294.3 A1.8 1.8 0 0 1 395.1 296.1 H386.3 Z" fill="#3a96fa"/>
<text x="355" y="292.8" font-size="4.85" fill="#fff" stroke="#fff" stroke-width=".15">Tampa (TPA)</text>
<path d="M389.6 289 L393.6 293 M393.6 289 L389.6 293" stroke="#fff" stroke-width="1.05"/>
<!-- legend -->
<clipPath id="lgc"><rect x="147.1" y="484.9" width="97.8" height="8.9" rx="1.6"/></clipPath>
<g clip-path="url(#lgc)">
<rect x="147.1" y="484.9" width="18.7" height="8.9" fill="#12883a"/><rect x="165.8" y="484.9" width="19.6" height="8.9" fill="#9db615"/><rect x="185.4" y="484.9" width="19.8" height="8.9" fill="#ecc80c"/><rect x="205.2" y="484.9" width="18.9" height="8.9" fill="#eb9c55"/><rect x="224.1" y="484.9" width="21" height="8.9" fill="#e6664c"/>
</g>
<g font-size="4.3" fill="#fff" stroke="#fff" stroke-width=".1" text-anchor="middle">
<text x="156.4" y="491">$ 10 +</text><text x="175.6" y="491">$ 40 +</text><text x="195.3" y="491">$ 60 +</text><text x="214.6" y="491">$ 80 +</text><text x="234.6" y="491">$ 110 +</text>
</g>
</svg>
</body></html>
